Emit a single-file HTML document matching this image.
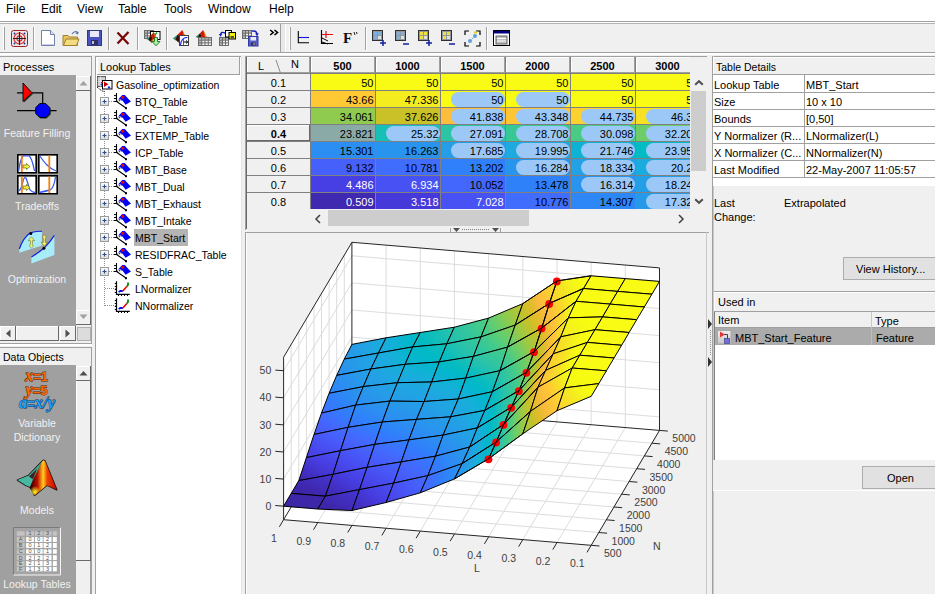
<!DOCTYPE html><html><head><meta charset="utf-8"><style>
html,body{margin:0;padding:0;width:935px;height:594px;overflow:hidden;background:#f0f0f0}
.a{position:absolute}
.t{white-space:nowrap;font-family:"Liberation Sans",sans-serif}
.tl{font-family:"Liberation Sans",sans-serif;font-size:10.5px;fill:#404040}
svg{overflow:visible}
</style></head><body><div class="a" style="left:0px;top:0px;width:935px;height:21px;background:#fff;"></div><div class="a" style="left:0px;top:21px;width:935px;height:1px;background:#a0a0a0;"></div><div class="a" style="left:0px;top:22px;width:935px;height:1px;background:#fff;"></div><div class="a" style="left:0px;top:23px;width:935px;height:1px;background:#b4b4b4;"></div><div class="a" style="left:0px;top:24px;width:935px;height:28px;background:#f0f0f0;"></div><div class="a" style="left:0px;top:52px;width:935px;height:1px;background:#a0a0a0;"></div><div class="a" style="left:0px;top:53px;width:935px;height:2px;background:#fff;"></div><div class="a" style="left:0px;top:55px;width:935px;height:539px;background:#f0f0f0;"></div><div class="a t" style="top:0.84px;font-size:12px;line-height:16px;color:#000;font-weight:normal;left:6px;">File</div><div class="a t" style="top:0.84px;font-size:12px;line-height:16px;color:#000;font-weight:normal;left:41px;">Edit</div><div class="a t" style="top:0.84px;font-size:12px;line-height:16px;color:#000;font-weight:normal;left:77px;">View</div><div class="a t" style="top:0.84px;font-size:12px;line-height:16px;color:#000;font-weight:normal;left:118px;">Table</div><div class="a t" style="top:0.84px;font-size:12px;line-height:16px;color:#000;font-weight:normal;left:164px;">Tools</div><div class="a t" style="top:0.84px;font-size:12px;line-height:16px;color:#000;font-weight:normal;left:208px;">Window</div><div class="a t" style="top:0.84px;font-size:12px;line-height:16px;color:#000;font-weight:normal;left:269px;">Help</div><div class="a" style="left:3px;top:27px;width:1px;height:23px;background:#fff;"></div><div class="a" style="left:4px;top:27px;width:1px;height:23px;background:#a0a0a0;"></div><div class="a" style="left:33px;top:27px;width:1px;height:23px;background:#a0a0a0;"></div><div class="a" style="left:34px;top:27px;width:1px;height:23px;background:#fff;"></div><div class="a" style="left:108px;top:27px;width:1px;height:23px;background:#a0a0a0;"></div><div class="a" style="left:109px;top:27px;width:1px;height:23px;background:#fff;"></div><div class="a" style="left:137px;top:27px;width:1px;height:23px;background:#a0a0a0;"></div><div class="a" style="left:138px;top:27px;width:1px;height:23px;background:#fff;"></div><div class="a" style="left:166px;top:27px;width:1px;height:23px;background:#a0a0a0;"></div><div class="a" style="left:167px;top:27px;width:1px;height:23px;background:#fff;"></div><div class="a" style="left:280px;top:24px;width:1px;height:28px;background:#a0a0a0;"></div><div class="a" style="left:281px;top:24px;width:4px;height:28px;background:#e8e8e8;"></div><div class="a" style="left:285px;top:24px;width:1px;height:28px;background:#fff;"></div><div class="a" style="left:289px;top:27px;width:1px;height:23px;background:#fff;"></div><div class="a" style="left:290px;top:27px;width:1px;height:23px;background:#a0a0a0;"></div><div class="a" style="left:365px;top:27px;width:1px;height:23px;background:#a0a0a0;"></div><div class="a" style="left:366px;top:27px;width:1px;height:23px;background:#fff;"></div><div class="a" style="left:486px;top:27px;width:1px;height:23px;background:#a0a0a0;"></div><div class="a" style="left:487px;top:27px;width:1px;height:23px;background:#fff;"></div><svg class="a" style="left:11px;top:30px" width="17" height="17" viewBox="0 0 17 17"><rect x="0.5" y="0.5" width="16" height="16" rx="2" fill="#e8e8ec" stroke="#a02020"/><circle cx="8.5" cy="8.5" r="5.5" fill="none" stroke="#e03030" stroke-width="1.2"/><circle cx="8.5" cy="8.5" r="2.6" fill="none" stroke="#e03030" stroke-width="1.1"/><path d="M8.5 2V15M2 8.5H15" stroke="#202020" stroke-width="1.2"/><circle cx="3.5" cy="3.5" r="0.9" fill="#203080"/><circle cx="13.5" cy="3.5" r="0.9" fill="#203080"/><circle cx="3.5" cy="13.5" r="0.9" fill="#203080"/><circle cx="13.5" cy="13.5" r="0.9" fill="#203080"/></svg><svg class="a" style="left:41px;top:30px" width="15" height="17" viewBox="0 0 15 17"><path d="M0.5 0.5H9.5L13.5 4.5V15.5H0.5Z" fill="#fff" stroke="#7080a8"/><path d="M9.5 0.5V4.5H13.5" fill="#dde4f4" stroke="#7080a8"/><path d="M1.5 14.5H12.5" stroke="#c8d0e8"/></svg><svg class="a" style="left:62px;top:30px" width="18" height="17" viewBox="0 0 18 17"><path d="M1 5.5H6L7.5 7H15.5V15.5H1Z" fill="#e8c45a" stroke="#a08030"/><path d="M1.5 15.5L4 9H17L14.5 15.5Z" fill="#f6dc80" stroke="#a08030"/><path d="M10 4Q13 0 16 3" fill="none" stroke="#5070a0" stroke-width="1.2"/><path d="M16.5 1.5L16 4.5L13.5 3.5Z" fill="#5070a0"/></svg><svg class="a" style="left:87px;top:30px" width="15" height="16" viewBox="0 0 15 16"><rect x="0.5" y="0.5" width="14" height="15" fill="#4a52c0" stroke="#303880"/><rect x="3" y="1" width="9" height="6" fill="#e8eaf8"/><rect x="4" y="10" width="7" height="5" fill="#303060"/><rect x="5" y="11" width="2" height="3" fill="#c0c0d0"/></svg><svg class="a" style="left:116px;top:31px" width="14" height="14" viewBox="0 0 14 14"><path d="M1.5 1.5L12.5 13M12.5 1L1.5 12.5" stroke="#780808" stroke-width="2.3"/></svg><svg class="a" style="left:143px;top:29px" width="19" height="19" viewBox="143 29 19 19"><rect x="144" y="30" width="10" height="9" fill="#6a6a6a"/><rect x="145.00" y="31.00" width="2.00" height="1.67" fill="#b8b8b8"/><rect x="148.00" y="31.00" width="2.00" height="1.67" fill="#b8b8b8"/><rect x="151.00" y="31.00" width="2.00" height="1.67" fill="#b8b8b8"/><rect x="145.00" y="33.67" width="2.00" height="1.67" fill="#b8b8b8"/><rect x="148.00" y="33.67" width="2.00" height="1.67" fill="#f2f2f2"/><rect x="151.00" y="33.67" width="2.00" height="1.67" fill="#f2f2f2"/><rect x="145.00" y="36.33" width="2.00" height="1.67" fill="#b8b8b8"/><rect x="148.00" y="36.33" width="2.00" height="1.67" fill="#f2f2f2"/><rect x="151.00" y="36.33" width="2.00" height="1.67" fill="#f2f2f2"/><rect x="150.5" y="31.5" width="9.5" height="8" fill="#fff" stroke="#000"/><path d="M153 32.5L155 35L157 32.5M155 35V38" stroke="#20a030" stroke-width="1.3" fill="none"/><g transform="translate(146.5,32.5) scale(0.72)"><path d="M0 9L5 5L8 7L6 13Z" fill="#2a9070"/><path d="M5 5L10 0L16 12L11 10L7 15L6 13L8 7Z" fill="#d01808"/><path d="M10 0L16 12L13 11Z" fill="#f8a010"/><path d="M7 15L9 9L11 10Z" fill="#f0d020"/><path d="M5 5L8 7L6 13L3 10Z" fill="#400808"/></g><path d="M154.5 37.5H157.5V41.5H160L156 45.8L152 41.5H154.5Z" fill="#a8f0a8" stroke="#187818" stroke-width="0.9"/></svg><svg class="a" style="left:172px;top:29px" width="18" height="18" viewBox="172 29 18 18"><g transform="translate(172.8,30) scale(0.95)"><path d="M0 9L5 5L8 7L6 13Z" fill="#2a9070"/><path d="M5 5L10 0L16 12L11 10L7 15L6 13L8 7Z" fill="#d01808"/><path d="M10 0L16 12L13 11Z" fill="#f8a010"/><path d="M7 15L9 9L11 10Z" fill="#f0d020"/><path d="M5 5L8 7L6 13L3 10Z" fill="#400808"/></g><rect x="179.5" y="35.5" width="9" height="10" fill="#fff" stroke="#404040"/><path d="M180.5 45Q181.5 37 187.5 37.5" stroke="#1020f0" stroke-width="1.1" fill="none"/><path d="M183.5 38.5V45" stroke="#10a020" stroke-width="1"/><path d="M183.5 42H187.5M186 40.5L187.8 42L186 43.5" stroke="#000" stroke-width="1" fill="none"/></svg><svg class="a" style="left:195px;top:29px" width="18" height="18" viewBox="195 29 18 18"><g transform="translate(195.7,30) scale(0.75)"><path d="M0 9L5 5L8 7L6 13Z" fill="#2a9070"/><path d="M5 5L10 0L16 12L11 10L7 15L6 13L8 7Z" fill="#d01808"/><path d="M10 0L16 12L13 11Z" fill="#f8a010"/><path d="M7 15L9 9L11 10Z" fill="#f0d020"/><path d="M5 5L8 7L6 13L3 10Z" fill="#400808"/></g><rect x="198" y="37" width="14" height="9" fill="#6a6a6a"/><rect x="199.00" y="38.00" width="2.25" height="1.67" fill="#b8b8b8"/><rect x="202.25" y="38.00" width="2.25" height="1.67" fill="#b8b8b8"/><rect x="205.50" y="38.00" width="2.25" height="1.67" fill="#b8b8b8"/><rect x="208.75" y="38.00" width="2.25" height="1.67" fill="#b8b8b8"/><rect x="199.00" y="40.67" width="2.25" height="1.67" fill="#b8b8b8"/><rect x="202.25" y="40.67" width="2.25" height="1.67" fill="#f2f2f2"/><rect x="205.50" y="40.67" width="2.25" height="1.67" fill="#f2f2f2"/><rect x="208.75" y="40.67" width="2.25" height="1.67" fill="#f2f2f2"/><rect x="199.00" y="43.33" width="2.25" height="1.67" fill="#b8b8b8"/><rect x="202.25" y="43.33" width="2.25" height="1.67" fill="#f2f2f2"/><rect x="205.50" y="43.33" width="2.25" height="1.67" fill="#f2f2f2"/><rect x="208.75" y="43.33" width="2.25" height="1.67" fill="#f2f2f2"/></svg><svg class="a" style="left:218px;top:29px" width="19" height="19" viewBox="218 29 19 19"><rect x="219" y="37" width="10" height="9" fill="#6a6a6a"/><rect x="220.00" y="38.00" width="2.00" height="1.67" fill="#b8b8b8"/><rect x="223.00" y="38.00" width="2.00" height="1.67" fill="#b8b8b8"/><rect x="226.00" y="38.00" width="2.00" height="1.67" fill="#b8b8b8"/><rect x="220.00" y="40.67" width="2.00" height="1.67" fill="#b8b8b8"/><rect x="223.00" y="40.67" width="2.00" height="1.67" fill="#f2f2f2"/><rect x="226.00" y="40.67" width="2.00" height="1.67" fill="#f2f2f2"/><rect x="220.00" y="43.33" width="2.00" height="1.67" fill="#b8b8b8"/><rect x="223.00" y="43.33" width="2.00" height="1.67" fill="#f2f2f2"/><rect x="226.00" y="43.33" width="2.00" height="1.67" fill="#f2f2f2"/><path d="M225 33Q221 31 220.5 35" stroke="#1020c0" stroke-width="1.4" fill="none"/><path d="M218.8 34L222.3 34L220.5 36.8Z" fill="#1020c0"/><rect x="225.5" y="30.5" width="6" height="6.5" fill="#fff" stroke="#000"/><rect x="229" y="32.5" width="6.5" height="6.5" fill="#f0f000" stroke="#000"/><rect x="230.5" y="36" width="3.5" height="2.5" fill="#505050"/></svg><svg class="a" style="left:241px;top:29px" width="19" height="19" viewBox="241 29 19 19"><rect x="242" y="30" width="10" height="9" fill="#6a6a6a"/><rect x="243.00" y="31.00" width="2.00" height="1.67" fill="#b8b8b8"/><rect x="246.00" y="31.00" width="2.00" height="1.67" fill="#b8b8b8"/><rect x="249.00" y="31.00" width="2.00" height="1.67" fill="#b8b8b8"/><rect x="243.00" y="33.67" width="2.00" height="1.67" fill="#b8b8b8"/><rect x="246.00" y="33.67" width="2.00" height="1.67" fill="#f2f2f2"/><rect x="249.00" y="33.67" width="2.00" height="1.67" fill="#f2f2f2"/><rect x="243.00" y="36.33" width="2.00" height="1.67" fill="#b8b8b8"/><rect x="246.00" y="36.33" width="2.00" height="1.67" fill="#f2f2f2"/><rect x="249.00" y="36.33" width="2.00" height="1.67" fill="#f2f2f2"/><path d="M252 31Q256.5 30.5 257 34" stroke="#1020c0" stroke-width="1.4" fill="none"/><path d="M255.2 33.5H258.8L257 36.3Z" fill="#1020c0"/><rect x="248.5" y="36.5" width="9.5" height="9.5" fill="#5860c8" stroke="#3038a0"/><rect x="250.5" y="37" width="5.5" height="3.5" fill="#e8ecf8"/><rect x="251" y="42.5" width="4.5" height="3" fill="#303050"/><rect x="253.5" y="43" width="1.2" height="2" fill="#b0b0c0"/></svg><svg class="a" style="left:268px;top:28px" width="12" height="9" viewBox="268 28 12 9"><path d="M270.2 30L273.2 32.5L270.2 35M274.5 30L277.5 32.5L274.5 35" stroke="#000" stroke-width="1.6" fill="none"/></svg><svg class="a" style="left:297px;top:30px" width="13" height="15" viewBox="0 0 13 15"><path d="M1.3 1V12.7H12" stroke="#000" fill="none" stroke-width="1.1"/><path d="M2 7.5H12" stroke="#1010e0" stroke-width="1.1"/></svg><svg class="a" style="left:320px;top:30px" width="14" height="15" viewBox="0 0 14 15"><path d="M1.5 0V13.5H13" stroke="#000" fill="none" stroke-width="1.2"/><path d="M2 4.5H13M6 1V8" stroke="#e01010" stroke-width="1.2"/><path d="M2 8L8 11M2 12L8 14" stroke="#000" stroke-width="1"/></svg><svg class="a" style="left:343px;top:30px" width="15" height="15" viewBox="0 0 15 15"><text x="0" y="13" font-family="Liberation Serif" font-weight="bold" font-size="15" fill="#101010">F</text><path d="M11 2L12 5M13.5 2L14 4" stroke="#202020"/></svg><svg class="a" style="left:372px;top:30px" width="15" height="17" viewBox="0 0 15 17"><rect x="0.5" y="0.5" width="10" height="10" fill="#9098a0" stroke="#303030"/><rect x="2" y="2" width="3" height="3" fill="#80b0e0"/><rect x="6" y="2" width="3" height="3" fill="#80b0e0"/><rect x="2" y="6" width="3" height="3" fill="#80b0e0"/><rect x="6" y="6" width="3" height="3" fill="#e0e0e0"/><path d="M8 13H14M11 10V16" stroke="#1020a0" stroke-width="1.5"/></svg><svg class="a" style="left:395px;top:30px" width="15" height="17" viewBox="0 0 15 17"><rect x="0.5" y="0.5" width="10" height="10" fill="#9098a0" stroke="#303030"/><rect x="2" y="2" width="3" height="3" fill="#80b0e0"/><rect x="6" y="2" width="3" height="3" fill="#80b0e0"/><rect x="2" y="6" width="3" height="3" fill="#80b0e0"/><rect x="6" y="6" width="3" height="3" fill="#e0e0e0"/><path d="M8 14H14" stroke="#1020a0" stroke-width="1.5"/></svg><svg class="a" style="left:418px;top:30px" width="15" height="17" viewBox="0 0 15 17"><rect x="0.5" y="0.5" width="10" height="10" fill="#9098a0" stroke="#303030"/><rect x="2" y="2" width="3" height="3" fill="#f0e040"/><rect x="6" y="2" width="3" height="3" fill="#f0e040"/><rect x="2" y="6" width="3" height="3" fill="#f0e040"/><rect x="6" y="6" width="3" height="3" fill="#e0e0e0"/><path d="M8 13H14M11 10V16" stroke="#1020a0" stroke-width="1.5"/></svg><svg class="a" style="left:441px;top:30px" width="15" height="17" viewBox="0 0 15 17"><rect x="0.5" y="0.5" width="10" height="10" fill="#9098a0" stroke="#303030"/><rect x="2" y="2" width="3" height="3" fill="#f0e040"/><rect x="6" y="2" width="3" height="3" fill="#f0e040"/><rect x="2" y="6" width="3" height="3" fill="#f0e040"/><rect x="6" y="6" width="3" height="3" fill="#e0e0e0"/><path d="M8 14H14" stroke="#1020a0" stroke-width="1.5"/></svg><svg class="a" style="left:464px;top:30px" width="17" height="17" viewBox="0 0 17 17"><path d="M1 5V1H5M12 1H16V5M16 12V16H12M5 16H1V12" stroke="#000" fill="none" stroke-width="1.2"/><circle cx="6" cy="11" r="2" fill="#60a0e0"/><circle cx="11" cy="6" r="2" fill="#60a0e0"/><path d="M6 11L11 6" stroke="#60a0e0" stroke-dasharray="1.5 1"/><rect x="10" y="1.5" width="3" height="2" fill="#e0d020"/></svg><svg class="a" style="left:493px;top:30px" width="17" height="16" viewBox="0 0 17 16"><rect x="0.5" y="0.5" width="16" height="15" fill="#fff" stroke="#000"/><rect x="1" y="1" width="15" height="2.5" fill="#000080"/><rect x="3" y="6" width="11" height="8" fill="#c0c0c0" stroke="#606060"/><path d="M4 8.5H13M4 11H13" stroke="#fff"/></svg><div class="a" style="left:0px;top:56px;width:92px;height:1px;background:#a0a0a0;"></div><div class="a" style="left:91px;top:56px;width:1px;height:287px;background:#a0a0a0;"></div><div class="a t" style="top:59.69px;font-size:11px;line-height:15px;color:#000;font-weight:normal;left:3px;">Processes</div><div class="a" style="left:0px;top:75px;width:76px;height:251px;background:#a0a0a0;"></div><div class="a" style="left:76px;top:75px;width:15px;height:251px;background:#f0f0f0;"></div><div class="a" style="left:76px;top:76px;width:15px;height:15px;background:#f0f0f0;box-shadow:inset -1px -1px #696969, inset 1px 1px #fff;"></div><svg class="a" style="left:79px;top:80px" width="9" height="6" viewBox="0 0 9 6"><path d="M0.5 5.5L4.5 1L8.5 5.5Z" fill="#a0a0a0"/></svg><div class="a" style="left:76px;top:310px;width:15px;height:15px;background:#f0f0f0;box-shadow:inset -1px -1px #696969, inset 1px 1px #fff;"></div><svg class="a" style="left:79px;top:314px" width="9" height="6" viewBox="0 0 9 6"><path d="M0.5 0.5L4.5 5L8.5 0.5Z" fill="#a0a0a0"/></svg><div class="a" style="left:76px;top:91px;width:15px;height:219px;background:#f0f0f0;box-shadow:inset -1px 0 #696969;"></div><div class="a" style="left:0px;top:326px;width:91px;height:15px;background:#f0f0f0;"></div><div class="a" style="left:0px;top:326px;width:16px;height:15px;background:#f0f0f0;box-shadow:inset -1px -1px #696969, inset 1px 1px #fff;"></div><svg class="a" style="left:5px;top:329px" width="6" height="9" viewBox="0 0 6 9"><path d="M5.5 0.5L1 4.5L5.5 8.5Z" fill="#505050"/></svg><div class="a" style="left:16px;top:326px;width:43px;height:15px;background:#f0f0f0;box-shadow:inset -1px -1px #696969, inset 1px 1px #fff;"></div><div class="a" style="left:60px;top:326px;width:16px;height:15px;background:#f0f0f0;box-shadow:inset -1px -1px #696969, inset 1px 1px #fff;"></div><svg class="a" style="left:65px;top:329px" width="6" height="9" viewBox="0 0 6 9"><path d="M0.5 0.5L5 4.5L0.5 8.5Z" fill="#505050"/></svg><div class="a" style="left:77px;top:327px;width:14px;height:14px;background:#dcdcdc;border:1px solid #b0b0b0;box-sizing:border-box;"></div><svg class="a" style="left:10px;top:78px" width="55" height="50" viewBox="10 78 55 50"><path d="M17 92.8H23M32 92.8H42.7V103M17 110.6H56.6" stroke="#000" stroke-width="1.2" fill="none"/><path d="M24 84.5L33 94L24 102.5Z" fill="#303030"/><path d="M23 83L32 92.8L23 101.5Z" fill="#f00" stroke="#000" stroke-width="0.9"/><polygon points="50.72,114.41 46.61,118.52 40.79,118.52 36.68,114.41 36.68,108.59 40.79,104.48 46.61,104.48 50.72,108.59" fill="#303030"/><polygon points="49.72,113.41 45.61,117.52 39.79,117.52 35.68,113.41 35.68,107.59 39.79,103.48 45.61,103.48 49.72,107.59" fill="#0000f8" stroke="#000" stroke-width="0.9"/></svg><div class="a t" style="top:126.11px;font-size:10.5px;line-height:14.5px;color:#f2f2f2;font-weight:normal;left:-113px;width:300px;text-align:center;">Feature Filling</div><svg class="a" style="left:17px;top:154px" width="41" height="41" viewBox="0 0 41 41"><g transform="translate(0,0)"><rect x="1" y="1" width="18" height="17.5" fill="#fff" stroke="#303030" stroke-width="0.6"/><rect x="0.75" y="0.75" width="18.5" height="18" fill="none" stroke="#000" stroke-width="1.5"/><path d="M1.6 17Q3 6 6 1.8H12Q15 4 17.5 17" stroke="#3a5af0" fill="none" stroke-width="1.3"/><path d="M4.8 1.5V18" stroke="#f88000" stroke-width="1.8"/><path d="M6 11.0H9.5V9.5L13 12.5L9.5 15.5V14.0H6Z" fill="#f0f040" stroke="#505000" stroke-width="0.6"/></g><g transform="translate(21,0)"><rect x="1" y="1" width="18" height="17.5" fill="#fff" stroke="#303030" stroke-width="0.6"/><rect x="0.75" y="0.75" width="18.5" height="18" fill="none" stroke="#000" stroke-width="1.5"/><path d="M1.5 1.5Q6 8 9 11Q13 15 18 17" stroke="#3a5af0" fill="none" stroke-width="1.3"/><path d="M11.3 1.5V18" stroke="#f88000" stroke-width="1.8"/></g><g transform="translate(0,21)"><rect x="1" y="1" width="18" height="17.5" fill="#fff" stroke="#303030" stroke-width="0.6"/><rect x="0.75" y="0.75" width="18.5" height="18" fill="none" stroke="#000" stroke-width="1.5"/><path d="M1.5 16Q4 15 5.5 8Q7 1 9 3Q11 8 12 13Q14 17 18 17.5" stroke="#3a5af0" fill="none" stroke-width="1.3"/><path d="M4.8 1.5V18" stroke="#f88000" stroke-width="1.8"/><path d="M6 11.0H9.5V9.5L13 12.5L9.5 15.5V14.0H6Z" fill="#f0f040" stroke="#505000" stroke-width="0.6"/></g><g transform="translate(21,21)"><rect x="1" y="1" width="18" height="17.5" fill="#fff" stroke="#303030" stroke-width="0.6"/><rect x="0.75" y="0.75" width="18.5" height="18" fill="none" stroke="#000" stroke-width="1.5"/><path d="M1.5 17.5Q8 16 12 15Q16 13 17.5 2" stroke="#3a5af0" fill="none" stroke-width="1.3"/><path d="M11.3 1.5V18" stroke="#f88000" stroke-width="1.8"/></g></svg><div class="a t" style="top:199.11px;font-size:10.5px;line-height:14.5px;color:#f2f2f2;font-weight:normal;left:-113px;width:300px;text-align:center;">Tradeoffs</div><svg class="a" style="left:14px;top:226px" width="46" height="40" viewBox="14 226 46 40"><path d="M19.3 249Q23 238 30 233Q35 231 41.9 231.3V245.4L19.3 252.7Z" fill="#a8ecfa"/><path d="M19.3 249Q23 238 30 233Q35 231 41.9 231.3" stroke="#1020e0" stroke-width="1.2" fill="none"/><path d="M31.4 257.1Q38 253 43.9 248.3Q50 242 54.4 235.3V255.1L31.4 263.6Z" fill="#a8ecfa"/><path d="M31.4 257.1Q38 253 43.9 248.3Q50 242 54.4 235.3" stroke="#1020e0" stroke-width="1.2" fill="none"/><circle cx="30.8" cy="233.6" r="1.5" fill="#000"/><circle cx="43.9" cy="248.3" r="1.5" fill="#000"/><path d="M31.4 236.8L34.6 240.6H32.4V244.3L33.3 246.2L31.4 248L29.5 246.2L30.4 244.3V240.6H28.2Z" fill="#f4f070" stroke="#606000" stroke-width="0.5"/><path d="M44.3 246.2L47.5 242.4H45.3V238.7L46.2 236.8L44.3 235L42.4 236.8L43.3 238.7V242.4H41.1Z" fill="#f4f070" stroke="#606000" stroke-width="0.5"/></svg><div class="a t" style="top:272.11px;font-size:10.5px;line-height:14.5px;color:#f2f2f2;font-weight:normal;left:-113px;width:300px;text-align:center;">Optimization</div><div class="a" style="left:0px;top:343px;width:92px;height:1px;background:#a0a0a0;"></div><div class="a" style="left:0px;top:344px;width:92px;height:2px;background:#fff;"></div><div class="a" style="left:0px;top:347px;width:92px;height:1px;background:#a0a0a0;"></div><div class="a" style="left:91px;top:347px;width:1px;height:247px;background:#a0a0a0;"></div><div class="a t" style="top:350.11px;font-size:10.5px;line-height:14.5px;color:#000;font-weight:normal;left:3px;">Data Objects</div><div class="a" style="left:0px;top:365px;width:76px;height:229px;background:#a0a0a0;"></div><div class="a" style="left:76px;top:365px;width:15px;height:229px;background:#f0f0f0;"></div><div class="a" style="left:76px;top:366px;width:15px;height:15px;background:#f0f0f0;box-shadow:inset -1px -1px #696969, inset 1px 1px #fff;"></div><svg class="a" style="left:79px;top:370px" width="9" height="6" viewBox="0 0 9 6"><path d="M0.5 5.5L4.5 1L8.5 5.5Z" fill="#505050"/></svg><div class="a" style="left:76px;top:381px;width:15px;height:180px;background:#f0f0f0;box-shadow:inset -1px -1px #696969, inset 1px 0 #fff;"></div><div class="a" style="left:76px;top:561px;width:15px;height:33px;background:#f0f0f0;box-shadow:inset -1px 0 #a0a0a0;"></div><svg class="a" style="left:10px;top:366px" width="55" height="48" viewBox="10 366 55 48"><text x="36.5" y="381.3" text-anchor="middle" fill="#f86a00" stroke="#5a2000" stroke-width="0.9" paint-order="stroke"><tspan font-family="Liberation Serif" font-style="italic" font-weight="bold" font-size="16.5">x</tspan><tspan font-family="Liberation Sans" font-weight="bold" font-size="13">=1</tspan></text><text x="36.5" y="394.5" text-anchor="middle" fill="#f86a00" stroke="#5a2000" stroke-width="0.9" paint-order="stroke"><tspan font-family="Liberation Serif" font-style="italic" font-weight="bold" font-size="16.5">y</tspan><tspan font-family="Liberation Sans" font-weight="bold" font-size="13">=5</tspan></text><text x="37" y="407.5" text-anchor="middle" fill="#18a0f8" stroke="#083060" stroke-width="0.9" paint-order="stroke"><tspan font-family="Liberation Serif" font-style="italic" font-weight="bold" font-size="16.5">a</tspan><tspan font-family="Liberation Sans" font-weight="bold" font-size="13">=</tspan><tspan font-family="Liberation Serif" font-style="italic" font-weight="bold" font-size="16.5">x/y</tspan></text></svg><div class="a t" style="top:416.11px;font-size:10.5px;line-height:14.5px;color:#f2f2f2;font-weight:normal;left:-113px;width:300px;text-align:center;">Variable</div><div class="a t" style="top:430.11px;font-size:10.5px;line-height:14.5px;color:#f2f2f2;font-weight:normal;left:-113px;width:300px;text-align:center;">Dictionary</div><svg class="a" style="left:14px;top:456px" width="46" height="44" viewBox="14 456 46 44"><defs><linearGradient id="mlb" gradientUnits="userSpaceOnUse" x1="31" y1="478" x2="57" y2="478"><stop offset="0" stop-color="#400000"/><stop offset="0.25" stop-color="#c01000"/><stop offset="0.47" stop-color="#ffd020"/><stop offset="0.62" stop-color="#f04000"/><stop offset="1" stop-color="#c00000"/></linearGradient><radialGradient id="mly" gradientUnits="userSpaceOnUse" cx="35" cy="492" r="6"><stop offset="0" stop-color="#ffff20"/><stop offset="1" stop-color="#ffff20" stop-opacity="0"/></radialGradient></defs><path d="M17.4 480.1L28.5 475.5L41.5 462L43.3 460.2L45 461L56.8 489.8L47 485.2L34.5 495.4L29.9 487L26.2 485.6Z" fill="#101010" stroke="#101010" stroke-width="1.4" stroke-linejoin="round"/><path d="M33.1 479.6L41.5 462L43.3 460.2L45 461L56.8 489.8L47 485.2L34.5 495.4L29.9 487Z" fill="url(#mlb)"/><path d="M29 490L34.5 495.4L42 489L36 484Z" fill="url(#mly)"/><path d="M17.4 480.1L28.5 475.5L33.1 479.6L29.9 487L26.2 485.6Z" fill="#48b8a0"/><path d="M28.5 475.5L41.5 462L39 468L33.1 479.6Z" fill="#40a890"/><path d="M29 476.5L37 469L33 479Z" fill="#402020"/></svg><div class="a t" style="top:503.11px;font-size:10.5px;line-height:14.5px;color:#f2f2f2;font-weight:normal;left:-113px;width:300px;text-align:center;">Models</div><svg class="a" style="left:10px;top:524px" width="55" height="55" viewBox="10 524 55 55"><rect x="13.5" y="527.5" width="47" height="47.5" fill="#a4a4a4"/><path d="M13.5 575V527.5H60.5" stroke="#7a7a7a" fill="none"/><path d="M60.5 527.5V575H13.5" stroke="#f4f4f4" fill="none"/><rect x="16.8" y="531.3" width="7.8" height="4.4" fill="#c4c4c4"/><rect x="26.1" y="531.3" width="7.8" height="4.4" fill="#c4c4c4"/><text x="30.0" y="535.1" text-anchor="middle" font-family="Liberation Sans" font-size="5.5" fill="#505050">1</text><rect x="34.9" y="531.3" width="7.8" height="4.4" fill="#c4c4c4"/><text x="38.8" y="535.1" text-anchor="middle" font-family="Liberation Sans" font-size="5.5" fill="#505050">2</text><rect x="43.6" y="531.3" width="7.9" height="4.4" fill="#c4c4c4"/><text x="47.5" y="535.1" text-anchor="middle" font-family="Liberation Sans" font-size="5.5" fill="#505050">3</text><rect x="52.9" y="531.3" width="3.9" height="4.4" fill="#c4c4c4"/><rect x="16.8" y="537.1" width="7.8" height="4.9" fill="#c4c4c4"/><text x="20.7" y="541.4" text-anchor="middle" font-family="Liberation Sans" font-size="5.5" fill="#505050">A</text><rect x="26.1" y="537.1" width="7.8" height="4.9" fill="#ffffff"/><text x="30.0" y="541.4" text-anchor="middle" font-family="Liberation Sans" font-size="5.5" fill="#505050">0</text><rect x="34.9" y="537.1" width="7.8" height="4.9" fill="#ffffff"/><text x="38.8" y="541.4" text-anchor="middle" font-family="Liberation Sans" font-size="5.5" fill="#505050">0</text><rect x="43.6" y="537.1" width="7.9" height="4.9" fill="#ffffff"/><text x="47.5" y="541.4" text-anchor="middle" font-family="Liberation Sans" font-size="5.5" fill="#505050">2</text><rect x="52.9" y="537.1" width="3.9" height="4.9" fill="#ffffff"/><rect x="16.8" y="543" width="7.8" height="4.9" fill="#c4c4c4"/><text x="20.7" y="547.3" text-anchor="middle" font-family="Liberation Sans" font-size="5.5" fill="#505050">B</text><rect x="26.1" y="543" width="7.8" height="4.9" fill="#ffffff"/><text x="30.0" y="547.3" text-anchor="middle" font-family="Liberation Sans" font-size="5.5" fill="#505050">0</text><rect x="34.9" y="543" width="7.8" height="4.9" fill="#ffffff"/><text x="38.8" y="547.3" text-anchor="middle" font-family="Liberation Sans" font-size="5.5" fill="#505050">1</text><rect x="43.6" y="543" width="7.9" height="4.9" fill="#ffffff"/><text x="47.5" y="547.3" text-anchor="middle" font-family="Liberation Sans" font-size="5.5" fill="#505050">2</text><rect x="52.9" y="543" width="3.9" height="4.9" fill="#ffffff"/><rect x="16.8" y="549.3" width="7.8" height="4.4" fill="#c4c4c4"/><text x="20.7" y="553.1" text-anchor="middle" font-family="Liberation Sans" font-size="5.5" fill="#505050">C</text><rect x="26.1" y="549.3" width="7.8" height="4.4" fill="#ffffff"/><text x="30.0" y="553.1" text-anchor="middle" font-family="Liberation Sans" font-size="5.5" fill="#505050">0</text><rect x="34.9" y="549.3" width="7.8" height="4.4" fill="#ffffff"/><text x="38.8" y="553.1" text-anchor="middle" font-family="Liberation Sans" font-size="5.5" fill="#505050">0</text><rect x="43.6" y="549.3" width="7.9" height="4.4" fill="#ffffff"/><text x="47.5" y="553.1" text-anchor="middle" font-family="Liberation Sans" font-size="5.5" fill="#505050">1</text><rect x="52.9" y="549.3" width="3.9" height="4.4" fill="#ffffff"/><rect x="16.8" y="555.2" width="7.8" height="4.9" fill="#c4c4c4"/><text x="20.7" y="559.5" text-anchor="middle" font-family="Liberation Sans" font-size="5.5" fill="#505050">D</text><rect x="26.1" y="555.2" width="7.8" height="4.9" fill="#ffffff"/><text x="30.0" y="559.5" text-anchor="middle" font-family="Liberation Sans" font-size="5.5" fill="#505050">2</text><rect x="34.9" y="555.2" width="7.8" height="4.9" fill="#ffffff"/><text x="38.8" y="559.5" text-anchor="middle" font-family="Liberation Sans" font-size="5.5" fill="#505050">2</text><rect x="43.6" y="555.2" width="7.9" height="4.9" fill="#ffffff"/><text x="47.5" y="559.5" text-anchor="middle" font-family="Liberation Sans" font-size="5.5" fill="#505050">2</text><rect x="52.9" y="555.2" width="3.9" height="4.9" fill="#ffffff"/><rect x="16.8" y="561.1" width="7.8" height="4.9" fill="#c4c4c4"/><text x="20.7" y="565.4" text-anchor="middle" font-family="Liberation Sans" font-size="5.5" fill="#505050">E</text><rect x="26.1" y="561.1" width="7.8" height="4.9" fill="#ffffff"/><text x="30.0" y="565.4" text-anchor="middle" font-family="Liberation Sans" font-size="5.5" fill="#505050">2</text><rect x="34.9" y="561.1" width="7.8" height="4.9" fill="#ffffff"/><text x="38.8" y="565.4" text-anchor="middle" font-family="Liberation Sans" font-size="5.5" fill="#505050">1</text><rect x="43.6" y="561.1" width="7.9" height="4.9" fill="#ffffff"/><text x="47.5" y="565.4" text-anchor="middle" font-family="Liberation Sans" font-size="5.5" fill="#505050">3</text><rect x="52.9" y="561.1" width="3.9" height="4.9" fill="#ffffff"/><rect x="16.8" y="566.9" width="7.8" height="4.4" fill="#c4c4c4"/><text x="20.7" y="570.7" text-anchor="middle" font-family="Liberation Sans" font-size="5.5" fill="#505050">F</text><rect x="26.1" y="566.9" width="7.8" height="4.4" fill="#ffffff"/><text x="30.0" y="570.7" text-anchor="middle" font-family="Liberation Sans" font-size="5.5" fill="#505050">1</text><rect x="34.9" y="566.9" width="7.8" height="4.4" fill="#ffffff"/><text x="38.8" y="570.7" text-anchor="middle" font-family="Liberation Sans" font-size="5.5" fill="#505050">3</text><rect x="43.6" y="566.9" width="7.9" height="4.4" fill="#ffffff"/><text x="47.5" y="570.7" text-anchor="middle" font-family="Liberation Sans" font-size="5.5" fill="#505050">3</text><rect x="52.9" y="566.9" width="3.9" height="4.4" fill="#ffffff"/></svg><div class="a t" style="top:577.11px;font-size:10.5px;line-height:14.5px;color:#f2f2f2;font-weight:normal;left:-113px;width:300px;text-align:center;">Lookup Tables</div><div class="a" style="left:92px;top:56px;width:3px;height:538px;background:#f0f0f0;"></div><div class="a" style="left:95px;top:56px;width:147px;height:538px;background:#fff;"></div><div class="a" style="left:95px;top:56px;width:147px;height:1px;background:#a0a0a0;"></div><div class="a" style="left:95px;top:56px;width:1px;height:538px;background:#a0a0a0;"></div><div class="a" style="left:96px;top:57px;width:1px;height:537px;background:#ffffff;"></div><div class="a" style="left:241px;top:56px;width:1px;height:538px;background:#e3e3e3;"></div><div class="a" style="left:97px;top:57px;width:143px;height:18px;background:#f0f0f0;box-shadow:inset -1px -1px #a0a0a0, inset 1px 1px #fff;"></div><div class="a t" style="top:59.69px;font-size:11px;line-height:15px;color:#000;font-weight:normal;left:100px;">Lookup Tables</div><svg class="a" style="left:96px;top:75px" width="18" height="18" viewBox="96 75 18 18"><rect x="97.5" y="76.5" width="8" height="10" fill="#c8c8c8" stroke="#404040" stroke-width="0.8"/><path d="M97.5 79H105.5M97.5 81.5H105.5M97.5 84H105.5M100.5 76.5V86.5" stroke="#f0f0f0" stroke-width="0.6"/><rect x="102.5" y="80.5" width="9.5" height="8.5" fill="#fff" stroke="#000"/><path d="M104 81.5V87L108.5 84.2Z" fill="#c00000"/><path d="M101 82.5H103" stroke="#e00000"/><circle cx="101.5" cy="84.5" r="1" fill="#1030f0"/><circle cx="109" cy="87.5" r="1.2" fill="#1030f0"/><path d="M97 87L102 91L105 91.5" stroke="#000" stroke-dasharray="1.2 0.8" fill="none"/></svg><div class="a t" style="top:78.11px;font-size:10.5px;line-height:14.5px;color:#000;font-weight:normal;left:116px;">Gasoline_optimization</div><svg class="a" style="left:100px;top:90px" width="40" height="220"><path d="M4.5 3V216" stroke="#909090" stroke-dasharray="1 1"/><path d="M9 11.5H16" stroke="#909090" stroke-dasharray="1 1"/><path d="M9 28.5H16" stroke="#909090" stroke-dasharray="1 1"/><path d="M9 45.5H16" stroke="#909090" stroke-dasharray="1 1"/><path d="M9 62.5H16" stroke="#909090" stroke-dasharray="1 1"/><path d="M9 79.5H16" stroke="#909090" stroke-dasharray="1 1"/><path d="M9 96.5H16" stroke="#909090" stroke-dasharray="1 1"/><path d="M9 113.5H16" stroke="#909090" stroke-dasharray="1 1"/><path d="M9 130.5H16" stroke="#909090" stroke-dasharray="1 1"/><path d="M9 147.5H16" stroke="#909090" stroke-dasharray="1 1"/><path d="M9 164.5H16" stroke="#909090" stroke-dasharray="1 1"/><path d="M9 181.5H16" stroke="#909090" stroke-dasharray="1 1"/><path d="M5 198.5H16" stroke="#909090" stroke-dasharray="1 1"/><path d="M5 215.5H16" stroke="#909090" stroke-dasharray="1 1"/></svg><svg class="a" style="left:99px;top:96px" width="12" height="12" viewBox="99 96 12 12"><defs><linearGradient id="xb" x1="0" y1="0" x2="0" y2="1"><stop offset="0" stop-color="#fff"/><stop offset="1" stop-color="#d8d8d8"/></linearGradient></defs><rect x="100.5" y="97.5" width="8" height="8" fill="url(#xb)" stroke="#9a9a9a"/><path d="M102.5 101.5H106.5M104.5 99.5V103.5" stroke="#284c8c" stroke-width="1.1"/></svg><svg class="a" style="left:112px;top:92px" width="22" height="20" viewBox="112 92 22 20"><path d="M116.5 93.1V101.5L125.9 108" stroke="#000" fill="none" stroke-width="1.1"/><path d="M114 95.6H116.5M114 98.5H116.5M114 101.5H116.5" stroke="#000" stroke-width="1"/><path d="M116.5 101.5L121.5 100.2" stroke="#000" stroke-width="0.9" stroke-dasharray="1.5 0.8"/><rect x="125" y="107.2" width="2" height="2" fill="#000"/><path d="M118.1 99.4L122.2 95L124.8 95L128.9 99.6L131 101.5L125.6 104.8L122.6 100.7L120.7 99.4Z" fill="#0000f8"/><circle cx="122.8" cy="97.3" r="1.5" fill="#f00000"/></svg><div class="a t" style="top:95.11px;font-size:10.5px;line-height:14.5px;color:#000;font-weight:normal;left:135px;">BTQ_Table</div><svg class="a" style="left:99px;top:113px" width="12" height="12" viewBox="99 113 12 12"><defs><linearGradient id="xb" x1="0" y1="0" x2="0" y2="1"><stop offset="0" stop-color="#fff"/><stop offset="1" stop-color="#d8d8d8"/></linearGradient></defs><rect x="100.5" y="114.5" width="8" height="8" fill="url(#xb)" stroke="#9a9a9a"/><path d="M102.5 118.5H106.5M104.5 116.5V120.5" stroke="#284c8c" stroke-width="1.1"/></svg><svg class="a" style="left:112px;top:109px" width="22" height="20" viewBox="112 109 22 20"><path d="M116.5 110.1V118.5L125.9 125" stroke="#000" fill="none" stroke-width="1.1"/><path d="M114 112.6H116.5M114 115.5H116.5M114 118.5H116.5" stroke="#000" stroke-width="1"/><path d="M116.5 118.5L121.5 117.2" stroke="#000" stroke-width="0.9" stroke-dasharray="1.5 0.8"/><rect x="125" y="124.2" width="2" height="2" fill="#000"/><path d="M118.1 116.4L122.2 112L124.8 112L128.9 116.6L131 118.5L125.6 121.8L122.6 117.7L120.7 116.4Z" fill="#0000f8"/><circle cx="122.8" cy="114.3" r="1.5" fill="#f00000"/></svg><div class="a t" style="top:112.11px;font-size:10.5px;line-height:14.5px;color:#000;font-weight:normal;left:135px;">ECP_Table</div><svg class="a" style="left:99px;top:130px" width="12" height="12" viewBox="99 130 12 12"><defs><linearGradient id="xb" x1="0" y1="0" x2="0" y2="1"><stop offset="0" stop-color="#fff"/><stop offset="1" stop-color="#d8d8d8"/></linearGradient></defs><rect x="100.5" y="131.5" width="8" height="8" fill="url(#xb)" stroke="#9a9a9a"/><path d="M102.5 135.5H106.5M104.5 133.5V137.5" stroke="#284c8c" stroke-width="1.1"/></svg><svg class="a" style="left:112px;top:126px" width="22" height="20" viewBox="112 126 22 20"><path d="M116.5 127.1V135.5L125.9 142" stroke="#000" fill="none" stroke-width="1.1"/><path d="M114 129.6H116.5M114 132.5H116.5M114 135.5H116.5" stroke="#000" stroke-width="1"/><path d="M116.5 135.5L121.5 134.2" stroke="#000" stroke-width="0.9" stroke-dasharray="1.5 0.8"/><rect x="125" y="141.2" width="2" height="2" fill="#000"/><path d="M118.1 133.4L122.2 129L124.8 129L128.9 133.6L131 135.5L125.6 138.8L122.6 134.7L120.7 133.4Z" fill="#0000f8"/><circle cx="122.8" cy="131.3" r="1.5" fill="#f00000"/></svg><div class="a t" style="top:129.11px;font-size:10.5px;line-height:14.5px;color:#000;font-weight:normal;left:135px;">EXTEMP_Table</div><svg class="a" style="left:99px;top:147px" width="12" height="12" viewBox="99 147 12 12"><defs><linearGradient id="xb" x1="0" y1="0" x2="0" y2="1"><stop offset="0" stop-color="#fff"/><stop offset="1" stop-color="#d8d8d8"/></linearGradient></defs><rect x="100.5" y="148.5" width="8" height="8" fill="url(#xb)" stroke="#9a9a9a"/><path d="M102.5 152.5H106.5M104.5 150.5V154.5" stroke="#284c8c" stroke-width="1.1"/></svg><svg class="a" style="left:112px;top:143px" width="22" height="20" viewBox="112 143 22 20"><path d="M116.5 144.1V152.5L125.9 159" stroke="#000" fill="none" stroke-width="1.1"/><path d="M114 146.6H116.5M114 149.5H116.5M114 152.5H116.5" stroke="#000" stroke-width="1"/><path d="M116.5 152.5L121.5 151.2" stroke="#000" stroke-width="0.9" stroke-dasharray="1.5 0.8"/><rect x="125" y="158.2" width="2" height="2" fill="#000"/><path d="M118.1 150.4L122.2 146L124.8 146L128.9 150.6L131 152.5L125.6 155.8L122.6 151.7L120.7 150.4Z" fill="#0000f8"/><circle cx="122.8" cy="148.3" r="1.5" fill="#f00000"/></svg><div class="a t" style="top:146.11px;font-size:10.5px;line-height:14.5px;color:#000;font-weight:normal;left:135px;">ICP_Table</div><svg class="a" style="left:99px;top:164px" width="12" height="12" viewBox="99 164 12 12"><defs><linearGradient id="xb" x1="0" y1="0" x2="0" y2="1"><stop offset="0" stop-color="#fff"/><stop offset="1" stop-color="#d8d8d8"/></linearGradient></defs><rect x="100.5" y="165.5" width="8" height="8" fill="url(#xb)" stroke="#9a9a9a"/><path d="M102.5 169.5H106.5M104.5 167.5V171.5" stroke="#284c8c" stroke-width="1.1"/></svg><svg class="a" style="left:112px;top:160px" width="22" height="20" viewBox="112 160 22 20"><path d="M116.5 161.1V169.5L125.9 176" stroke="#000" fill="none" stroke-width="1.1"/><path d="M114 163.6H116.5M114 166.5H116.5M114 169.5H116.5" stroke="#000" stroke-width="1"/><path d="M116.5 169.5L121.5 168.2" stroke="#000" stroke-width="0.9" stroke-dasharray="1.5 0.8"/><rect x="125" y="175.2" width="2" height="2" fill="#000"/><path d="M118.1 167.4L122.2 163L124.8 163L128.9 167.6L131 169.5L125.6 172.8L122.6 168.7L120.7 167.4Z" fill="#0000f8"/><circle cx="122.8" cy="165.3" r="1.5" fill="#f00000"/></svg><div class="a t" style="top:163.11px;font-size:10.5px;line-height:14.5px;color:#000;font-weight:normal;left:135px;">MBT_Base</div><svg class="a" style="left:99px;top:181px" width="12" height="12" viewBox="99 181 12 12"><defs><linearGradient id="xb" x1="0" y1="0" x2="0" y2="1"><stop offset="0" stop-color="#fff"/><stop offset="1" stop-color="#d8d8d8"/></linearGradient></defs><rect x="100.5" y="182.5" width="8" height="8" fill="url(#xb)" stroke="#9a9a9a"/><path d="M102.5 186.5H106.5M104.5 184.5V188.5" stroke="#284c8c" stroke-width="1.1"/></svg><svg class="a" style="left:112px;top:177px" width="22" height="20" viewBox="112 177 22 20"><path d="M116.5 178.1V186.5L125.9 193" stroke="#000" fill="none" stroke-width="1.1"/><path d="M114 180.6H116.5M114 183.5H116.5M114 186.5H116.5" stroke="#000" stroke-width="1"/><path d="M116.5 186.5L121.5 185.2" stroke="#000" stroke-width="0.9" stroke-dasharray="1.5 0.8"/><rect x="125" y="192.2" width="2" height="2" fill="#000"/><path d="M118.1 184.4L122.2 180L124.8 180L128.9 184.6L131 186.5L125.6 189.8L122.6 185.7L120.7 184.4Z" fill="#0000f8"/><circle cx="122.8" cy="182.3" r="1.5" fill="#f00000"/></svg><div class="a t" style="top:180.11px;font-size:10.5px;line-height:14.5px;color:#000;font-weight:normal;left:135px;">MBT_Dual</div><svg class="a" style="left:99px;top:198px" width="12" height="12" viewBox="99 198 12 12"><defs><linearGradient id="xb" x1="0" y1="0" x2="0" y2="1"><stop offset="0" stop-color="#fff"/><stop offset="1" stop-color="#d8d8d8"/></linearGradient></defs><rect x="100.5" y="199.5" width="8" height="8" fill="url(#xb)" stroke="#9a9a9a"/><path d="M102.5 203.5H106.5M104.5 201.5V205.5" stroke="#284c8c" stroke-width="1.1"/></svg><svg class="a" style="left:112px;top:194px" width="22" height="20" viewBox="112 194 22 20"><path d="M116.5 195.1V203.5L125.9 210" stroke="#000" fill="none" stroke-width="1.1"/><path d="M114 197.6H116.5M114 200.5H116.5M114 203.5H116.5" stroke="#000" stroke-width="1"/><path d="M116.5 203.5L121.5 202.2" stroke="#000" stroke-width="0.9" stroke-dasharray="1.5 0.8"/><rect x="125" y="209.2" width="2" height="2" fill="#000"/><path d="M118.1 201.4L122.2 197L124.8 197L128.9 201.6L131 203.5L125.6 206.8L122.6 202.7L120.7 201.4Z" fill="#0000f8"/><circle cx="122.8" cy="199.3" r="1.5" fill="#f00000"/></svg><div class="a t" style="top:197.11px;font-size:10.5px;line-height:14.5px;color:#000;font-weight:normal;left:135px;">MBT_Exhaust</div><svg class="a" style="left:99px;top:215px" width="12" height="12" viewBox="99 215 12 12"><defs><linearGradient id="xb" x1="0" y1="0" x2="0" y2="1"><stop offset="0" stop-color="#fff"/><stop offset="1" stop-color="#d8d8d8"/></linearGradient></defs><rect x="100.5" y="216.5" width="8" height="8" fill="url(#xb)" stroke="#9a9a9a"/><path d="M102.5 220.5H106.5M104.5 218.5V222.5" stroke="#284c8c" stroke-width="1.1"/></svg><svg class="a" style="left:112px;top:211px" width="22" height="20" viewBox="112 211 22 20"><path d="M116.5 212.1V220.5L125.9 227" stroke="#000" fill="none" stroke-width="1.1"/><path d="M114 214.6H116.5M114 217.5H116.5M114 220.5H116.5" stroke="#000" stroke-width="1"/><path d="M116.5 220.5L121.5 219.2" stroke="#000" stroke-width="0.9" stroke-dasharray="1.5 0.8"/><rect x="125" y="226.2" width="2" height="2" fill="#000"/><path d="M118.1 218.4L122.2 214L124.8 214L128.9 218.6L131 220.5L125.6 223.8L122.6 219.7L120.7 218.4Z" fill="#0000f8"/><circle cx="122.8" cy="216.3" r="1.5" fill="#f00000"/></svg><div class="a t" style="top:214.11px;font-size:10.5px;line-height:14.5px;color:#000;font-weight:normal;left:135px;">MBT_Intake</div><svg class="a" style="left:99px;top:232px" width="12" height="12" viewBox="99 232 12 12"><defs><linearGradient id="xb" x1="0" y1="0" x2="0" y2="1"><stop offset="0" stop-color="#fff"/><stop offset="1" stop-color="#d8d8d8"/></linearGradient></defs><rect x="100.5" y="233.5" width="8" height="8" fill="url(#xb)" stroke="#9a9a9a"/><path d="M102.5 237.5H106.5M104.5 235.5V239.5" stroke="#284c8c" stroke-width="1.1"/></svg><svg class="a" style="left:112px;top:228px" width="22" height="20" viewBox="112 228 22 20"><path d="M116.5 229.1V237.5L125.9 244" stroke="#000" fill="none" stroke-width="1.1"/><path d="M114 231.6H116.5M114 234.5H116.5M114 237.5H116.5" stroke="#000" stroke-width="1"/><path d="M116.5 237.5L121.5 236.2" stroke="#000" stroke-width="0.9" stroke-dasharray="1.5 0.8"/><rect x="125" y="243.2" width="2" height="2" fill="#000"/><path d="M118.1 235.4L122.2 231L124.8 231L128.9 235.6L131 237.5L125.6 240.8L122.6 236.7L120.7 235.4Z" fill="#0000f8"/><circle cx="122.8" cy="233.3" r="1.5" fill="#f00000"/></svg><div class="a" style="left:134px;top:229px;width:54px;height:17px;background:#b4b4b4;"></div><div class="a t" style="top:231.11px;font-size:10.5px;line-height:14.5px;color:#000;font-weight:normal;left:135px;">MBT_Start</div><svg class="a" style="left:99px;top:249px" width="12" height="12" viewBox="99 249 12 12"><defs><linearGradient id="xb" x1="0" y1="0" x2="0" y2="1"><stop offset="0" stop-color="#fff"/><stop offset="1" stop-color="#d8d8d8"/></linearGradient></defs><rect x="100.5" y="250.5" width="8" height="8" fill="url(#xb)" stroke="#9a9a9a"/><path d="M102.5 254.5H106.5M104.5 252.5V256.5" stroke="#284c8c" stroke-width="1.1"/></svg><svg class="a" style="left:112px;top:245px" width="22" height="20" viewBox="112 245 22 20"><path d="M116.5 246.1V254.5L125.9 261" stroke="#000" fill="none" stroke-width="1.1"/><path d="M114 248.6H116.5M114 251.5H116.5M114 254.5H116.5" stroke="#000" stroke-width="1"/><path d="M116.5 254.5L121.5 253.2" stroke="#000" stroke-width="0.9" stroke-dasharray="1.5 0.8"/><rect x="125" y="260.2" width="2" height="2" fill="#000"/><path d="M118.1 252.4L122.2 248L124.8 248L128.9 252.6L131 254.5L125.6 257.8L122.6 253.7L120.7 252.4Z" fill="#0000f8"/><circle cx="122.8" cy="250.3" r="1.5" fill="#f00000"/></svg><div class="a t" style="top:248.11px;font-size:10.5px;line-height:14.5px;color:#000;font-weight:normal;left:135px;">RESIDFRAC_Table</div><svg class="a" style="left:99px;top:266px" width="12" height="12" viewBox="99 266 12 12"><defs><linearGradient id="xb" x1="0" y1="0" x2="0" y2="1"><stop offset="0" stop-color="#fff"/><stop offset="1" stop-color="#d8d8d8"/></linearGradient></defs><rect x="100.5" y="267.5" width="8" height="8" fill="url(#xb)" stroke="#9a9a9a"/><path d="M102.5 271.5H106.5M104.5 269.5V273.5" stroke="#284c8c" stroke-width="1.1"/></svg><svg class="a" style="left:112px;top:262px" width="22" height="20" viewBox="112 262 22 20"><path d="M116.5 263.1V271.5L125.9 278" stroke="#000" fill="none" stroke-width="1.1"/><path d="M114 265.6H116.5M114 268.5H116.5M114 271.5H116.5" stroke="#000" stroke-width="1"/><path d="M116.5 271.5L121.5 270.2" stroke="#000" stroke-width="0.9" stroke-dasharray="1.5 0.8"/><rect x="125" y="277.2" width="2" height="2" fill="#000"/><path d="M118.1 269.4L122.2 265L124.8 265L128.9 269.6L131 271.5L125.6 274.8L122.6 270.7L120.7 269.4Z" fill="#0000f8"/><circle cx="122.8" cy="267.3" r="1.5" fill="#f00000"/></svg><div class="a t" style="top:265.11px;font-size:10.5px;line-height:14.5px;color:#000;font-weight:normal;left:135px;">S_Table</div><svg class="a" style="left:112px;top:279px" width="20" height="20" viewBox="112 279 20 20"><path d="M116.5 281.3V294.4H129.8" stroke="#000" stroke-width="1.2" fill="none"/><path d="M114.8 283.5H116.5M114.8 286.5H116.5M114.8 289.5H116.5M114.8 292.5H116.5M118.5 294.4V296M121.5 294.4V296M124.5 294.4V296M127.5 294.4V296" stroke="#000" stroke-width="1"/><path d="M118.6 292L120.3 291H122.8" stroke="#0010f8" stroke-width="1.8" fill="none"/><path d="M122.8 291L126.8 286.5" stroke="#f00000" stroke-width="1.6"/><path d="M126.8 286.5L128 285V282.5" stroke="#008800" stroke-width="1.8" fill="none"/></svg><div class="a t" style="top:282.11px;font-size:10.5px;line-height:14.5px;color:#000;font-weight:normal;left:135px;">LNormalizer</div><svg class="a" style="left:112px;top:296px" width="20" height="20" viewBox="112 296 20 20"><path d="M116.5 298.3V311.4H129.8" stroke="#000" stroke-width="1.2" fill="none"/><path d="M114.8 300.5H116.5M114.8 303.5H116.5M114.8 306.5H116.5M114.8 309.5H116.5M118.5 311.4V313M121.5 311.4V313M124.5 311.4V313M127.5 311.4V313" stroke="#000" stroke-width="1"/><path d="M118.6 309L120.3 308H122.8" stroke="#0010f8" stroke-width="1.8" fill="none"/><path d="M122.8 308L126.8 303.5" stroke="#f00000" stroke-width="1.6"/><path d="M126.8 303.5L128 302V299.5" stroke="#008800" stroke-width="1.8" fill="none"/></svg><div class="a t" style="top:299.11px;font-size:10.5px;line-height:14.5px;color:#000;font-weight:normal;left:135px;">NNormalizer</div><div class="a" style="left:242px;top:56px;width:3px;height:538px;background:#f0f0f0;"></div><div class="a" style="left:245px;top:56px;width:462px;height:174px;background:#f0f0f0;"></div><div class="a" style="left:245px;top:56px;width:462px;height:1px;background:#a0a0a0;"></div><div class="a" style="left:245px;top:56px;width:1px;height:174px;background:#a0a0a0;"></div><div class="a" style="left:246px;top:57px;width:1px;height:172px;background:#696969;"></div><div class="a" style="left:247px;top:57px;width:443px;height:152px;overflow:hidden;background:#808080"><div class="a" style="left:0;top:0;width:63px;height:16px;background:#f0f0f0;box-shadow:inset -1px -1px #a0a0a0, inset 1px 1px #fff"></div><svg class="a" style="left:0;top:0" width="63" height="16"><path d="M29 3L33.5 16" stroke="#8c8c8c"/></svg><div class="a t" style="left:11px;top:1px;font-size:11px;line-height:16px">L</div><div class="a t" style="left:44px;top:-1px;font-size:11px;line-height:16px">N</div><div class="a" style="left:63.5px;top:0;width:64px;height:16px;background:#f0f0f0;box-shadow:inset -1px -1px #a0a0a0, inset 1px 1px #fff"></div><div class="a t" style="left:63.5px;top:1px;width:64px;text-align:center;font-size:11px;line-height:16px;font-weight:bold">500</div><div class="a" style="left:128.5px;top:0;width:64px;height:16px;background:#f0f0f0;box-shadow:inset -1px -1px #a0a0a0, inset 1px 1px #fff"></div><div class="a t" style="left:128.5px;top:1px;width:64px;text-align:center;font-size:11px;line-height:16px;font-weight:bold">1000</div><div class="a" style="left:193.5px;top:0;width:64px;height:16px;background:#f0f0f0;box-shadow:inset -1px -1px #a0a0a0, inset 1px 1px #fff"></div><div class="a t" style="left:193.5px;top:1px;width:64px;text-align:center;font-size:11px;line-height:16px;font-weight:bold">1500</div><div class="a" style="left:258.5px;top:0;width:64px;height:16px;background:#f0f0f0;box-shadow:inset -1px -1px #a0a0a0, inset 1px 1px #fff"></div><div class="a t" style="left:258.5px;top:1px;width:64px;text-align:center;font-size:11px;line-height:16px;font-weight:bold">2000</div><div class="a" style="left:323.5px;top:0;width:64px;height:16px;background:#f0f0f0;box-shadow:inset -1px -1px #a0a0a0, inset 1px 1px #fff"></div><div class="a t" style="left:323.5px;top:1px;width:64px;text-align:center;font-size:11px;line-height:16px;font-weight:bold">2500</div><div class="a" style="left:388.5px;top:0;width:64px;height:16px;background:#f0f0f0;box-shadow:inset -1px -1px #a0a0a0, inset 1px 1px #fff"></div><div class="a t" style="left:388.5px;top:1px;width:64px;text-align:center;font-size:11px;line-height:16px;font-weight:bold">3000</div><div class="a" style="left:0;top:17px;width:63px;height:16px;background:#f0f0f0;box-shadow:inset 0 0 #fff"></div><div class="a t" style="left:0;top:18px;width:63px;text-align:center;font-size:11px;line-height:17px;font-weight:normal">0.1</div><div class="a" style="left:63.5px;top:17px;width:64px;height:16px;background:#f9fb15"></div><div class="a t" style="left:63.5px;top:18px;width:63px;text-align:right;font-size:11px;line-height:17px;color:#000">50</div><div class="a" style="left:128.5px;top:17px;width:64px;height:16px;background:#f9fb15"></div><div class="a t" style="left:128.5px;top:18px;width:63px;text-align:right;font-size:11px;line-height:17px;color:#000">50</div><div class="a" style="left:193.5px;top:17px;width:64px;height:16px;background:#f9fb15"></div><div class="a t" style="left:193.5px;top:18px;width:63px;text-align:right;font-size:11px;line-height:17px;color:#000">50</div><div class="a" style="left:258.5px;top:17px;width:64px;height:16px;background:#f9fb15"></div><div class="a t" style="left:258.5px;top:18px;width:63px;text-align:right;font-size:11px;line-height:17px;color:#000">50</div><div class="a" style="left:323.5px;top:17px;width:64px;height:16px;background:#f9fb15"></div><div class="a t" style="left:323.5px;top:18px;width:63px;text-align:right;font-size:11px;line-height:17px;color:#000">50</div><div class="a" style="left:388.5px;top:17px;width:64px;height:16px;background:#f9fb15"></div><div class="a t" style="left:388.5px;top:18px;width:63px;text-align:right;font-size:11px;line-height:17px;color:#000">50</div><div class="a" style="left:0;top:34px;width:63px;height:16px;background:#f0f0f0;box-shadow:inset 0 0 #fff"></div><div class="a t" style="left:0;top:35px;width:63px;text-align:center;font-size:11px;line-height:17px;font-weight:normal">0.2</div><div class="a" style="left:63.5px;top:34px;width:64px;height:16px;background:#fec934"></div><div class="a t" style="left:63.5px;top:35px;width:63px;text-align:right;font-size:11px;line-height:17px;color:#000">43.66</div><div class="a" style="left:128.5px;top:34px;width:64px;height:16px;background:#f5ec20"></div><div class="a t" style="left:128.5px;top:35px;width:63px;text-align:right;font-size:11px;line-height:17px;color:#000">47.336</div><div class="a" style="left:193.5px;top:34px;width:64px;height:16px;background:#f9fb15"></div><div class="a" style="left:203.5px;top:35px;width:54px;height:15px;border-radius:7.5px;background:#9cc8f8"></div><div class="a t" style="left:193.5px;top:35px;width:63px;text-align:right;font-size:11px;line-height:17px;color:#000">50</div><div class="a" style="left:258.5px;top:34px;width:64px;height:16px;background:#f9fb15"></div><div class="a" style="left:268.5px;top:35px;width:54px;height:15px;border-radius:7.5px;background:#9cc8f8"></div><div class="a t" style="left:258.5px;top:35px;width:63px;text-align:right;font-size:11px;line-height:17px;color:#000">50</div><div class="a" style="left:323.5px;top:34px;width:64px;height:16px;background:#f9fb15"></div><div class="a t" style="left:323.5px;top:35px;width:63px;text-align:right;font-size:11px;line-height:17px;color:#000">50</div><div class="a" style="left:388.5px;top:34px;width:64px;height:16px;background:#f9fb15"></div><div class="a t" style="left:388.5px;top:35px;width:63px;text-align:right;font-size:11px;line-height:17px;color:#000">50</div><div class="a" style="left:0;top:51px;width:63px;height:16px;background:#f0f0f0;box-shadow:inset 0 0 #fff"></div><div class="a t" style="left:0;top:52px;width:63px;text-align:center;font-size:11px;line-height:17px;font-weight:normal">0.3</div><div class="a" style="left:63.5px;top:51px;width:64px;height:16px;background:#8ecb4f"></div><div class="a t" style="left:63.5px;top:52px;width:63px;text-align:right;font-size:11px;line-height:17px;color:#000">34.061</div><div class="a" style="left:128.5px;top:51px;width:64px;height:16px;background:#cac129"></div><div class="a t" style="left:128.5px;top:52px;width:63px;text-align:right;font-size:11px;line-height:17px;color:#000">37.626</div><div class="a" style="left:193.5px;top:51px;width:64px;height:16px;background:#fcbd3d"></div><div class="a" style="left:203.5px;top:52px;width:54px;height:15px;border-radius:7.5px;background:#9cc8f8"></div><div class="a t" style="left:193.5px;top:52px;width:63px;text-align:right;font-size:11px;line-height:17px;color:#000">41.838</div><div class="a" style="left:258.5px;top:51px;width:64px;height:16px;background:#fec635"></div><div class="a" style="left:268.5px;top:52px;width:54px;height:15px;border-radius:7.5px;background:#9cc8f8"></div><div class="a t" style="left:258.5px;top:52px;width:63px;text-align:right;font-size:11px;line-height:17px;color:#000">43.348</div><div class="a" style="left:323.5px;top:51px;width:64px;height:16px;background:#fbd22f"></div><div class="a" style="left:333.5px;top:52px;width:54px;height:15px;border-radius:7.5px;background:#9cc8f8"></div><div class="a t" style="left:323.5px;top:52px;width:63px;text-align:right;font-size:11px;line-height:17px;color:#000">44.735</div><div class="a" style="left:388.5px;top:51px;width:64px;height:16px;background:#f6e125"></div><div class="a" style="left:398.5px;top:52px;width:54px;height:15px;border-radius:7.5px;background:#9cc8f8"></div><div class="a t" style="left:388.5px;top:52px;width:63px;text-align:right;font-size:11px;line-height:17px;color:#000">46.35</div><div class="a" style="left:0;top:68px;width:63px;height:16px;background:#f0f0f0;box-shadow:inset -1px -1px #696969, inset 1px 1px #fff"></div><div class="a t" style="left:0;top:69px;width:63px;text-align:center;font-size:11px;line-height:17px;font-weight:bold">0.4</div><div class="a" style="left:63.5px;top:68px;width:64px;height:16px;background:#8aaaa8"></div><div class="a t" style="left:63.5px;top:69px;width:63px;text-align:right;font-size:11px;line-height:17px;color:#000">23.821</div><div class="a" style="left:128.5px;top:68px;width:64px;height:16px;background:#17bfb6"></div><div class="a" style="left:138.5px;top:69px;width:54px;height:15px;border-radius:7.5px;background:#9cc8f8"></div><div class="a t" style="left:128.5px;top:69px;width:63px;text-align:right;font-size:11px;line-height:17px;color:#000">25.32</div><div class="a" style="left:193.5px;top:68px;width:64px;height:16px;background:#2dc4a6"></div><div class="a" style="left:203.5px;top:69px;width:54px;height:15px;border-radius:7.5px;background:#9cc8f8"></div><div class="a t" style="left:193.5px;top:69px;width:63px;text-align:right;font-size:11px;line-height:17px;color:#000">27.091</div><div class="a" style="left:258.5px;top:68px;width:64px;height:16px;background:#38c895"></div><div class="a" style="left:268.5px;top:69px;width:54px;height:15px;border-radius:7.5px;background:#9cc8f8"></div><div class="a t" style="left:258.5px;top:69px;width:63px;text-align:right;font-size:11px;line-height:17px;color:#000">28.708</div><div class="a" style="left:323.5px;top:68px;width:64px;height:16px;background:#49cb85"></div><div class="a" style="left:333.5px;top:69px;width:54px;height:15px;border-radius:7.5px;background:#9cc8f8"></div><div class="a t" style="left:323.5px;top:69px;width:63px;text-align:right;font-size:11px;line-height:17px;color:#000">30.098</div><div class="a" style="left:388.5px;top:68px;width:64px;height:16px;background:#6ccd69"></div><div class="a" style="left:398.5px;top:69px;width:54px;height:15px;border-radius:7.5px;background:#9cc8f8"></div><div class="a t" style="left:388.5px;top:69px;width:63px;text-align:right;font-size:11px;line-height:17px;color:#000">32.202</div><div class="a" style="left:0;top:85px;width:63px;height:16px;background:#f0f0f0;box-shadow:inset 0 0 #fff"></div><div class="a t" style="left:0;top:86px;width:63px;text-align:center;font-size:11px;line-height:17px;font-weight:normal">0.5</div><div class="a" style="left:63.5px;top:85px;width:64px;height:16px;background:#2c8ef2"></div><div class="a t" style="left:63.5px;top:86px;width:63px;text-align:right;font-size:11px;line-height:17px;color:#000">15.301</div><div class="a" style="left:128.5px;top:85px;width:64px;height:16px;background:#2994ed"></div><div class="a t" style="left:128.5px;top:86px;width:63px;text-align:right;font-size:11px;line-height:17px;color:#000">16.263</div><div class="a" style="left:193.5px;top:85px;width:64px;height:16px;background:#259de7"></div><div class="a" style="left:203.5px;top:86px;width:54px;height:15px;border-radius:7.5px;background:#9cc8f8"></div><div class="a t" style="left:193.5px;top:86px;width:63px;text-align:right;font-size:11px;line-height:17px;color:#000">17.685</div><div class="a" style="left:258.5px;top:85px;width:64px;height:16px;background:#1caadf"></div><div class="a" style="left:268.5px;top:86px;width:54px;height:15px;border-radius:7.5px;background:#9cc8f8"></div><div class="a t" style="left:258.5px;top:86px;width:63px;text-align:right;font-size:11px;line-height:17px;color:#000">19.995</div><div class="a" style="left:323.5px;top:85px;width:64px;height:16px;background:#0eb3d4"></div><div class="a" style="left:333.5px;top:86px;width:54px;height:15px;border-radius:7.5px;background:#9cc8f8"></div><div class="a t" style="left:323.5px;top:86px;width:63px;text-align:right;font-size:11px;line-height:17px;color:#000">21.746</div><div class="a" style="left:388.5px;top:85px;width:64px;height:16px;background:#03bbc2"></div><div class="a" style="left:398.5px;top:86px;width:54px;height:15px;border-radius:7.5px;background:#9cc8f8"></div><div class="a t" style="left:388.5px;top:86px;width:63px;text-align:right;font-size:11px;line-height:17px;color:#000">23.953</div><div class="a" style="left:0;top:102px;width:63px;height:16px;background:#f0f0f0;box-shadow:inset 0 0 #fff"></div><div class="a t" style="left:0;top:103px;width:63px;text-align:center;font-size:11px;line-height:17px;font-weight:normal">0.6</div><div class="a" style="left:63.5px;top:102px;width:64px;height:16px;background:#4660fc"></div><div class="a t" style="left:63.5px;top:103px;width:63px;text-align:right;font-size:11px;line-height:17px;color:#000">9.132</div><div class="a" style="left:128.5px;top:102px;width:64px;height:16px;background:#406dfe"></div><div class="a t" style="left:128.5px;top:103px;width:63px;text-align:right;font-size:11px;line-height:17px;color:#000">10.781</div><div class="a" style="left:193.5px;top:102px;width:64px;height:16px;background:#307ffb"></div><div class="a t" style="left:193.5px;top:103px;width:63px;text-align:right;font-size:11px;line-height:17px;color:#000">13.202</div><div class="a" style="left:258.5px;top:102px;width:64px;height:16px;background:#2994ed"></div><div class="a" style="left:268.5px;top:103px;width:54px;height:15px;border-radius:7.5px;background:#9cc8f8"></div><div class="a t" style="left:258.5px;top:103px;width:63px;text-align:right;font-size:11px;line-height:17px;color:#000">16.284</div><div class="a" style="left:323.5px;top:102px;width:64px;height:16px;background:#23a1e5"></div><div class="a" style="left:333.5px;top:103px;width:54px;height:15px;border-radius:7.5px;background:#9cc8f8"></div><div class="a t" style="left:323.5px;top:103px;width:63px;text-align:right;font-size:11px;line-height:17px;color:#000">18.334</div><div class="a" style="left:388.5px;top:102px;width:64px;height:16px;background:#1babde"></div><div class="a" style="left:398.5px;top:103px;width:54px;height:15px;border-radius:7.5px;background:#9cc8f8"></div><div class="a t" style="left:388.5px;top:103px;width:63px;text-align:right;font-size:11px;line-height:17px;color:#000">20.22</div><div class="a" style="left:0;top:119px;width:63px;height:16px;background:#f0f0f0;box-shadow:inset 0 0 #fff"></div><div class="a t" style="left:0;top:120px;width:63px;text-align:center;font-size:11px;line-height:17px;font-weight:normal">0.7</div><div class="a" style="left:63.5px;top:119px;width:64px;height:16px;background:#473fe3"></div><div class="a t" style="left:63.5px;top:120px;width:63px;text-align:right;font-size:11px;line-height:17px;color:#fff">4.486</div><div class="a" style="left:128.5px;top:119px;width:64px;height:16px;background:#4851f3"></div><div class="a t" style="left:128.5px;top:120px;width:63px;text-align:right;font-size:11px;line-height:17px;color:#fff">6.934</div><div class="a" style="left:193.5px;top:119px;width:64px;height:16px;background:#4367fd"></div><div class="a t" style="left:193.5px;top:120px;width:63px;text-align:right;font-size:11px;line-height:17px;color:#000">10.052</div><div class="a" style="left:258.5px;top:119px;width:64px;height:16px;background:#2f81fa"></div><div class="a t" style="left:258.5px;top:120px;width:63px;text-align:right;font-size:11px;line-height:17px;color:#000">13.478</div><div class="a" style="left:323.5px;top:119px;width:64px;height:16px;background:#2994ed"></div><div class="a" style="left:333.5px;top:120px;width:54px;height:15px;border-radius:7.5px;background:#9cc8f8"></div><div class="a t" style="left:323.5px;top:120px;width:63px;text-align:right;font-size:11px;line-height:17px;color:#000">16.314</div><div class="a" style="left:388.5px;top:119px;width:64px;height:16px;background:#23a0e5"></div><div class="a" style="left:398.5px;top:120px;width:54px;height:15px;border-radius:7.5px;background:#9cc8f8"></div><div class="a t" style="left:388.5px;top:120px;width:63px;text-align:right;font-size:11px;line-height:17px;color:#000">18.245</div><div class="a" style="left:0;top:136px;width:63px;height:16px;background:#f0f0f0;box-shadow:inset 0 0 #fff"></div><div class="a t" style="left:0;top:137px;width:63px;text-align:center;font-size:11px;line-height:17px;font-weight:normal">0.8</div><div class="a" style="left:63.5px;top:136px;width:64px;height:16px;background:#3f29b0"></div><div class="a t" style="left:63.5px;top:137px;width:63px;text-align:right;font-size:11px;line-height:17px;color:#fff">0.509</div><div class="a" style="left:128.5px;top:136px;width:64px;height:16px;background:#4539d9"></div><div class="a t" style="left:128.5px;top:137px;width:63px;text-align:right;font-size:11px;line-height:17px;color:#fff">3.518</div><div class="a" style="left:193.5px;top:136px;width:64px;height:16px;background:#4851f4"></div><div class="a t" style="left:193.5px;top:137px;width:63px;text-align:right;font-size:11px;line-height:17px;color:#fff">7.028</div><div class="a" style="left:258.5px;top:136px;width:64px;height:16px;background:#406dfe"></div><div class="a t" style="left:258.5px;top:137px;width:63px;text-align:right;font-size:11px;line-height:17px;color:#000">10.776</div><div class="a" style="left:323.5px;top:136px;width:64px;height:16px;background:#2e87f7"></div><div class="a t" style="left:323.5px;top:137px;width:63px;text-align:right;font-size:11px;line-height:17px;color:#000">14.307</div><div class="a" style="left:388.5px;top:136px;width:64px;height:16px;background:#269ae8"></div><div class="a" style="left:398.5px;top:137px;width:54px;height:15px;border-radius:7.5px;background:#9cc8f8"></div><div class="a t" style="left:388.5px;top:137px;width:63px;text-align:right;font-size:11px;line-height:17px;color:#000">17.326</div></div><div class="a" style="left:690px;top:57px;width:17px;height:152px;background:#f0f0f0;"></div><svg class="a" style="left:694px;top:79px" width="10" height="7" viewBox="0 0 10 7"><path d="M1.2 5.8L5 2.2L8.8 5.8" stroke="#505050" stroke-width="2" fill="none"/></svg><div class="a" style="left:691px;top:91px;width:15px;height:80px;background:#cdcdcd;"></div><svg class="a" style="left:694px;top:198px" width="10" height="7" viewBox="0 0 10 7"><path d="M1.2 1.2L5 4.8L8.8 1.2" stroke="#505050" stroke-width="2" fill="none"/></svg><div class="a" style="left:247px;top:209px;width:443px;height:18px;background:#f0f0f0;"></div><svg class="a" style="left:314px;top:214px" width="7" height="10" viewBox="0 0 7 10"><path d="M6 1L2 5L6 9" stroke="#404040" stroke-width="1.5" fill="none"/></svg><div class="a" style="left:328px;top:210px;width:201px;height:16px;background:#cdcdcd;"></div><svg class="a" style="left:678px;top:214px" width="7" height="10" viewBox="0 0 7 10"><path d="M1 1L5 5L1 9" stroke="#404040" stroke-width="1.5" fill="none"/></svg><svg class="a" style="left:440px;top:226px" width="70" height="8" viewBox="440 226 70 8"><path d="M450.5 228V232.5M500.5 228V232.5" stroke="#a0a0a0"/><path d="M462 229.5H490" stroke="#808080" stroke-dasharray="1 1"/><path d="M453 228L460 228L456.5 232Z M492 228L499 228L495.5 232Z" fill="#505050"/></svg><div class="a" style="left:245px;top:232px;width:464px;height:362px;background:#f0f0f0;"></div><div class="a" style="left:245px;top:232px;width:464px;height:1px;background:#a0a0a0;"></div><div class="a" style="left:245px;top:232px;width:1px;height:362px;background:#a0a0a0;"></div><div class="a" style="left:246px;top:233px;width:1px;height:361px;background:#ffffff;"></div><div class="a" style="left:706px;top:232px;width:1px;height:362px;background:#c8c8c8;"></div><svg class="a" style="left:0;top:0" width="935" height="594"><defs><linearGradient id="g0" gradientUnits="userSpaceOnUse" x1="344.5" y1="349.3" x2="386.9" y2="347.8"><stop offset="0.00" stop-color="#2896eb"/><stop offset="0.12" stop-color="#2699e9"/><stop offset="0.25" stop-color="#259ce7"/><stop offset="0.38" stop-color="#23a0e5"/><stop offset="0.50" stop-color="#21a3e4"/><stop offset="0.62" stop-color="#1fa6e2"/><stop offset="0.75" stop-color="#1da9e0"/><stop offset="0.88" stop-color="#1aabdd"/><stop offset="1.00" stop-color="#17aeda"/></linearGradient><linearGradient id="g1" gradientUnits="userSpaceOnUse" x1="377.3" y1="343.5" x2="419.8" y2="341.6"><stop offset="0.00" stop-color="#1caadf"/><stop offset="0.12" stop-color="#1aacdd"/><stop offset="0.25" stop-color="#16afda"/><stop offset="0.38" stop-color="#12b1d6"/><stop offset="0.50" stop-color="#0cb3d3"/><stop offset="0.62" stop-color="#07b5cf"/><stop offset="0.75" stop-color="#03b7cb"/><stop offset="0.88" stop-color="#01b9c7"/><stop offset="1.00" stop-color="#02bac3"/></linearGradient><linearGradient id="g2" gradientUnits="userSpaceOnUse" x1="414.8" y1="345.6" x2="457.0" y2="327.5"><stop offset="0.00" stop-color="#01b8c8"/><stop offset="0.12" stop-color="#02bac5"/><stop offset="0.25" stop-color="#05bbc1"/><stop offset="0.38" stop-color="#0abdbd"/><stop offset="0.50" stop-color="#12beb9"/><stop offset="0.62" stop-color="#19bfb5"/><stop offset="0.75" stop-color="#20c1b1"/><stop offset="0.88" stop-color="#25c2ad"/><stop offset="1.00" stop-color="#2ac3a9"/></linearGradient><linearGradient id="g3" gradientUnits="userSpaceOnUse" x1="448.0" y1="342.8" x2="490.4" y2="318.5"><stop offset="0.00" stop-color="#19bfb6"/><stop offset="0.12" stop-color="#23c1af"/><stop offset="0.25" stop-color="#2ac3a8"/><stop offset="0.38" stop-color="#30c5a1"/><stop offset="0.50" stop-color="#35c79a"/><stop offset="0.62" stop-color="#3cc992"/><stop offset="0.75" stop-color="#44cb89"/><stop offset="0.88" stop-color="#4fcc80"/><stop offset="1.00" stop-color="#5bcc77"/></linearGradient><linearGradient id="g4" gradientUnits="userSpaceOnUse" x1="480.5" y1="333.5" x2="525.9" y2="306.8"><stop offset="0.00" stop-color="#3bc992"/><stop offset="0.12" stop-color="#49cb85"/><stop offset="0.25" stop-color="#5acc77"/><stop offset="0.38" stop-color="#6ccd68"/><stop offset="0.50" stop-color="#80cc59"/><stop offset="0.62" stop-color="#94ca4a"/><stop offset="0.75" stop-color="#a7c73c"/><stop offset="0.88" stop-color="#b9c431"/><stop offset="1.00" stop-color="#cac129"/></linearGradient><linearGradient id="g5" gradientUnits="userSpaceOnUse" x1="335.4" y1="372.4" x2="379.4" y2="356.0"><stop offset="0.00" stop-color="#2c8ef2"/><stop offset="0.12" stop-color="#2b91ef"/><stop offset="0.25" stop-color="#2895ec"/><stop offset="0.38" stop-color="#2699e9"/><stop offset="0.50" stop-color="#259ce7"/><stop offset="0.62" stop-color="#23a0e5"/><stop offset="0.75" stop-color="#21a3e3"/><stop offset="0.88" stop-color="#1fa6e1"/><stop offset="1.00" stop-color="#1caadf"/></linearGradient><linearGradient id="g6" gradientUnits="userSpaceOnUse" x1="511.0" y1="312.4" x2="562.0" y2="293.8"><stop offset="0.00" stop-color="#94ca4a"/><stop offset="0.12" stop-color="#b0c636"/><stop offset="0.25" stop-color="#c9c129"/><stop offset="0.38" stop-color="#dfbc2a"/><stop offset="0.50" stop-color="#f2ba38"/><stop offset="0.62" stop-color="#febf3b"/><stop offset="0.75" stop-color="#fdcb33"/><stop offset="0.88" stop-color="#f9d92a"/><stop offset="1.00" stop-color="#f5e921"/></linearGradient><linearGradient id="g7" gradientUnits="userSpaceOnUse" x1="372.9" y1="370.0" x2="412.9" y2="345.1"><stop offset="0.00" stop-color="#21a3e4"/><stop offset="0.12" stop-color="#1fa6e2"/><stop offset="0.25" stop-color="#1ca9e0"/><stop offset="0.38" stop-color="#1aacdd"/><stop offset="0.50" stop-color="#16afd9"/><stop offset="0.62" stop-color="#11b2d5"/><stop offset="0.75" stop-color="#09b4d1"/><stop offset="0.88" stop-color="#04b6cd"/><stop offset="1.00" stop-color="#01b8c8"/></linearGradient><linearGradient id="g8" gradientUnits="userSpaceOnUse" x1="545.5" y1="304.6" x2="584.3" y2="277.2"><stop offset="0.00" stop-color="#fec735"/><stop offset="0.12" stop-color="#fdce31"/><stop offset="0.25" stop-color="#fad52d"/><stop offset="0.38" stop-color="#f7dd28"/><stop offset="0.50" stop-color="#f5e523"/><stop offset="0.62" stop-color="#f5ee1e"/><stop offset="0.75" stop-color="#f5f816"/><stop offset="0.88" stop-color="#f7fc0f"/><stop offset="1.00" stop-color="#f9fb15"/></linearGradient><linearGradient id="g9" gradientUnits="userSpaceOnUse" x1="415.4" y1="370.3" x2="437.4" y2="336.8"><stop offset="0.00" stop-color="#11b1d6"/><stop offset="0.12" stop-color="#0bb4d2"/><stop offset="0.25" stop-color="#05b6ce"/><stop offset="0.38" stop-color="#01b7ca"/><stop offset="0.50" stop-color="#01b9c6"/><stop offset="0.62" stop-color="#03bbc2"/><stop offset="0.75" stop-color="#09bcbe"/><stop offset="0.88" stop-color="#10beba"/><stop offset="1.00" stop-color="#19bfb6"/></linearGradient><linearGradient id="g10" gradientUnits="userSpaceOnUse" x1="444.7" y1="366.0" x2="477.0" y2="332.0"><stop offset="0.00" stop-color="#01b9c7"/><stop offset="0.12" stop-color="#05bbc1"/><stop offset="0.25" stop-color="#0ebebb"/><stop offset="0.38" stop-color="#1ac0b5"/><stop offset="0.50" stop-color="#24c1ae"/><stop offset="0.62" stop-color="#2bc3a8"/><stop offset="0.75" stop-color="#30c5a1"/><stop offset="0.88" stop-color="#35c79a"/><stop offset="1.00" stop-color="#3bc992"/></linearGradient><linearGradient id="g11" gradientUnits="userSpaceOnUse" x1="476.1" y1="357.7" x2="514.7" y2="323.0"><stop offset="0.00" stop-color="#27c2ac"/><stop offset="0.12" stop-color="#2fc5a2"/><stop offset="0.25" stop-color="#36c898"/><stop offset="0.38" stop-color="#40ca8d"/><stop offset="0.50" stop-color="#4fcc81"/><stop offset="0.62" stop-color="#5fcd73"/><stop offset="0.75" stop-color="#70cd65"/><stop offset="0.88" stop-color="#82cc58"/><stop offset="1.00" stop-color="#94ca4a"/></linearGradient><linearGradient id="g12" gradientUnits="userSpaceOnUse" x1="330.7" y1="395.6" x2="369.0" y2="366.8"><stop offset="0.00" stop-color="#2f81fa"/><stop offset="0.12" stop-color="#2e85f8"/><stop offset="0.25" stop-color="#2d8af5"/><stop offset="0.38" stop-color="#2c8ef1"/><stop offset="0.50" stop-color="#2a93ee"/><stop offset="0.62" stop-color="#2797eb"/><stop offset="0.75" stop-color="#259be8"/><stop offset="0.88" stop-color="#249fe6"/><stop offset="1.00" stop-color="#21a3e4"/></linearGradient><linearGradient id="g13" gradientUnits="userSpaceOnUse" x1="504.3" y1="339.6" x2="554.6" y2="311.0"><stop offset="0.00" stop-color="#58cc79"/><stop offset="0.12" stop-color="#72cd63"/><stop offset="0.25" stop-color="#8fcb4e"/><stop offset="0.38" stop-color="#abc739"/><stop offset="0.50" stop-color="#c4c22b"/><stop offset="0.62" stop-color="#dbbd28"/><stop offset="0.75" stop-color="#eeba34"/><stop offset="0.88" stop-color="#fdbd3d"/><stop offset="1.00" stop-color="#fec735"/></linearGradient><linearGradient id="g14" gradientUnits="userSpaceOnUse" x1="370.5" y1="391.9" x2="398.9" y2="358.3"><stop offset="0.00" stop-color="#2798ea"/><stop offset="0.12" stop-color="#259be7"/><stop offset="0.25" stop-color="#249fe6"/><stop offset="0.38" stop-color="#22a2e4"/><stop offset="0.50" stop-color="#1fa6e2"/><stop offset="0.62" stop-color="#1da9e0"/><stop offset="0.75" stop-color="#1aacdd"/><stop offset="0.88" stop-color="#16afd9"/><stop offset="1.00" stop-color="#11b1d6"/></linearGradient><linearGradient id="g15" gradientUnits="userSpaceOnUse" x1="534.5" y1="315.1" x2="581.5" y2="298.8"><stop offset="0.00" stop-color="#dfbc2a"/><stop offset="0.12" stop-color="#efba35"/><stop offset="0.25" stop-color="#fcbd3d"/><stop offset="0.38" stop-color="#fec536"/><stop offset="0.50" stop-color="#fcd030"/><stop offset="0.62" stop-color="#f7dd28"/><stop offset="0.75" stop-color="#f5eb20"/><stop offset="0.88" stop-color="#f6f914"/><stop offset="1.00" stop-color="#f9fb15"/></linearGradient><linearGradient id="g16" gradientUnits="userSpaceOnUse" x1="412.6" y1="387.6" x2="425.0" y2="355.5"><stop offset="0.00" stop-color="#1ea7e1"/><stop offset="0.12" stop-color="#1caadf"/><stop offset="0.25" stop-color="#19acdc"/><stop offset="0.38" stop-color="#16afda"/><stop offset="0.50" stop-color="#12b1d6"/><stop offset="0.62" stop-color="#0cb3d3"/><stop offset="0.75" stop-color="#06b5cf"/><stop offset="0.88" stop-color="#02b7cb"/><stop offset="1.00" stop-color="#01b9c7"/></linearGradient><linearGradient id="g17" gradientUnits="userSpaceOnUse" x1="443.0" y1="387.3" x2="463.2" y2="350.0"><stop offset="0.00" stop-color="#18aedb"/><stop offset="0.12" stop-color="#12b1d6"/><stop offset="0.25" stop-color="#08b4d1"/><stop offset="0.38" stop-color="#02b7cb"/><stop offset="0.50" stop-color="#01bac5"/><stop offset="0.62" stop-color="#08bcbf"/><stop offset="0.75" stop-color="#13beb9"/><stop offset="0.88" stop-color="#1ec0b2"/><stop offset="1.00" stop-color="#27c2ac"/></linearGradient><linearGradient id="g18" gradientUnits="userSpaceOnUse" x1="473.6" y1="382.5" x2="501.1" y2="341.8"><stop offset="0.00" stop-color="#01b8c8"/><stop offset="0.12" stop-color="#06bcc0"/><stop offset="0.25" stop-color="#14bfb8"/><stop offset="0.38" stop-color="#23c1af"/><stop offset="0.50" stop-color="#2dc4a6"/><stop offset="0.62" stop-color="#34c79c"/><stop offset="0.75" stop-color="#3cc992"/><stop offset="0.88" stop-color="#48cb86"/><stop offset="1.00" stop-color="#58cc79"/></linearGradient><linearGradient id="g19" gradientUnits="userSpaceOnUse" x1="324.2" y1="416.9" x2="359.2" y2="383.5"><stop offset="0.00" stop-color="#406dfe"/><stop offset="0.12" stop-color="#3b73fe"/><stop offset="0.25" stop-color="#3579fd"/><stop offset="0.38" stop-color="#307efb"/><stop offset="0.50" stop-color="#2e84f9"/><stop offset="0.62" stop-color="#2d89f5"/><stop offset="0.75" stop-color="#2c8ef1"/><stop offset="0.88" stop-color="#2a93ed"/><stop offset="1.00" stop-color="#2798ea"/></linearGradient><linearGradient id="g20" gradientUnits="userSpaceOnUse" x1="496.6" y1="365.4" x2="545.3" y2="333.2"><stop offset="0.00" stop-color="#2cc4a7"/><stop offset="0.12" stop-color="#37c898"/><stop offset="0.25" stop-color="#48cb86"/><stop offset="0.38" stop-color="#60cd72"/><stop offset="0.50" stop-color="#7bcc5d"/><stop offset="0.62" stop-color="#97ca48"/><stop offset="0.75" stop-color="#b1c635"/><stop offset="0.88" stop-color="#cac129"/><stop offset="1.00" stop-color="#dfbc2a"/></linearGradient><linearGradient id="g21" gradientUnits="userSpaceOnUse" x1="364.1" y1="411.2" x2="389.1" y2="376.7"><stop offset="0.00" stop-color="#2d8af4"/><stop offset="0.12" stop-color="#2c8ef1"/><stop offset="0.25" stop-color="#2b92ee"/><stop offset="0.38" stop-color="#2896ec"/><stop offset="0.50" stop-color="#2699e9"/><stop offset="0.62" stop-color="#259de7"/><stop offset="0.75" stop-color="#23a0e5"/><stop offset="0.88" stop-color="#21a3e3"/><stop offset="1.00" stop-color="#1ea7e1"/></linearGradient><linearGradient id="g22" gradientUnits="userSpaceOnUse" x1="530.8" y1="326.5" x2="575.4" y2="323.1"><stop offset="0.00" stop-color="#a0c841"/><stop offset="0.12" stop-color="#c0c32d"/><stop offset="0.25" stop-color="#dbbd29"/><stop offset="0.38" stop-color="#f2ba37"/><stop offset="0.50" stop-color="#fec13a"/><stop offset="0.62" stop-color="#fccf30"/><stop offset="0.75" stop-color="#f6e126"/><stop offset="0.88" stop-color="#f5f518"/><stop offset="1.00" stop-color="#f9fb15"/></linearGradient><linearGradient id="g23" gradientUnits="userSpaceOnUse" x1="406.7" y1="405.5" x2="415.3" y2="376.6"><stop offset="0.00" stop-color="#269ae8"/><stop offset="0.12" stop-color="#259de7"/><stop offset="0.25" stop-color="#23a0e5"/><stop offset="0.38" stop-color="#22a2e4"/><stop offset="0.50" stop-color="#20a4e3"/><stop offset="0.62" stop-color="#1ea7e1"/><stop offset="0.75" stop-color="#1ca9df"/><stop offset="0.88" stop-color="#1aabdd"/><stop offset="1.00" stop-color="#18aedb"/></linearGradient><linearGradient id="g24" gradientUnits="userSpaceOnUse" x1="579.3" y1="329.9" x2="592.6" y2="303.4"><stop offset="0.00" stop-color="#f6f914"/><stop offset="0.12" stop-color="#f6fa13"/><stop offset="0.25" stop-color="#f7fb11"/><stop offset="0.38" stop-color="#f7fc10"/><stop offset="0.50" stop-color="#f7fc10"/><stop offset="0.62" stop-color="#f8fc11"/><stop offset="0.75" stop-color="#f8fb12"/><stop offset="0.88" stop-color="#f9fb13"/><stop offset="1.00" stop-color="#f9fb15"/></linearGradient><linearGradient id="g25" gradientUnits="userSpaceOnUse" x1="437.1" y1="406.8" x2="453.7" y2="371.6"><stop offset="0.00" stop-color="#23a0e5"/><stop offset="0.12" stop-color="#21a4e3"/><stop offset="0.25" stop-color="#1ea7e1"/><stop offset="0.38" stop-color="#1babde"/><stop offset="0.50" stop-color="#18aedb"/><stop offset="0.62" stop-color="#12b1d7"/><stop offset="0.75" stop-color="#0bb3d2"/><stop offset="0.88" stop-color="#05b6cd"/><stop offset="1.00" stop-color="#01b8c8"/></linearGradient><linearGradient id="g26" gradientUnits="userSpaceOnUse" x1="464.7" y1="403.8" x2="493.7" y2="365.7"><stop offset="0.00" stop-color="#1babde"/><stop offset="0.12" stop-color="#15afd9"/><stop offset="0.25" stop-color="#0cb3d3"/><stop offset="0.38" stop-color="#03b7cc"/><stop offset="0.50" stop-color="#01bac5"/><stop offset="0.62" stop-color="#09bcbe"/><stop offset="0.75" stop-color="#17bfb6"/><stop offset="0.88" stop-color="#23c1af"/><stop offset="1.00" stop-color="#2cc4a7"/></linearGradient><linearGradient id="g27" gradientUnits="userSpaceOnUse" x1="321.6" y1="439.3" x2="348.7" y2="399.9"><stop offset="0.00" stop-color="#4756f6"/><stop offset="0.12" stop-color="#475cfa"/><stop offset="0.25" stop-color="#4562fc"/><stop offset="0.38" stop-color="#4269fe"/><stop offset="0.50" stop-color="#3e70ff"/><stop offset="0.62" stop-color="#3777fe"/><stop offset="0.75" stop-color="#317efb"/><stop offset="0.88" stop-color="#2e84f8"/><stop offset="1.00" stop-color="#2d8af4"/></linearGradient><linearGradient id="g28" gradientUnits="userSpaceOnUse" x1="488.3" y1="380.3" x2="538.0" y2="362.9"><stop offset="0.00" stop-color="#03bbc2"/><stop offset="0.12" stop-color="#18bfb6"/><stop offset="0.25" stop-color="#29c3a9"/><stop offset="0.38" stop-color="#34c79c"/><stop offset="0.50" stop-color="#41ca8c"/><stop offset="0.62" stop-color="#56cc7b"/><stop offset="0.75" stop-color="#6dcd67"/><stop offset="0.88" stop-color="#87cb54"/><stop offset="1.00" stop-color="#a0c841"/></linearGradient><linearGradient id="g29" gradientUnits="userSpaceOnUse" x1="359.4" y1="433.5" x2="377.9" y2="395.8"><stop offset="0.00" stop-color="#3d71ff"/><stop offset="0.12" stop-color="#3777fe"/><stop offset="0.25" stop-color="#327cfc"/><stop offset="0.38" stop-color="#2f82fa"/><stop offset="0.50" stop-color="#2e87f7"/><stop offset="0.62" stop-color="#2d8cf3"/><stop offset="0.75" stop-color="#2b91ef"/><stop offset="0.88" stop-color="#2896ec"/><stop offset="1.00" stop-color="#269ae8"/></linearGradient><linearGradient id="g30" gradientUnits="userSpaceOnUse" x1="528.7" y1="343.0" x2="565.6" y2="346.2"><stop offset="0.00" stop-color="#6ccd69"/><stop offset="0.12" stop-color="#91ca4c"/><stop offset="0.25" stop-color="#b5c533"/><stop offset="0.38" stop-color="#d5be28"/><stop offset="0.50" stop-color="#efba35"/><stop offset="0.62" stop-color="#fec03a"/><stop offset="0.75" stop-color="#fcd030"/><stop offset="0.88" stop-color="#f6e424"/><stop offset="1.00" stop-color="#f6f914"/></linearGradient><linearGradient id="g31" gradientUnits="userSpaceOnUse" x1="397.1" y1="428.7" x2="407.8" y2="397.6"><stop offset="0.00" stop-color="#2e87f7"/><stop offset="0.12" stop-color="#2d8af4"/><stop offset="0.25" stop-color="#2c8ef2"/><stop offset="0.38" stop-color="#2b91ef"/><stop offset="0.50" stop-color="#2994ed"/><stop offset="0.62" stop-color="#2797eb"/><stop offset="0.75" stop-color="#269ae8"/><stop offset="0.88" stop-color="#249de7"/><stop offset="1.00" stop-color="#23a0e5"/></linearGradient><linearGradient id="g32" gradientUnits="userSpaceOnUse" x1="559.5" y1="343.0" x2="593.3" y2="316.0"><stop offset="0.00" stop-color="#f6e125"/><stop offset="0.12" stop-color="#f5e623"/><stop offset="0.25" stop-color="#f5eb20"/><stop offset="0.38" stop-color="#f5f01d"/><stop offset="0.50" stop-color="#f5f518"/><stop offset="0.62" stop-color="#f6f914"/><stop offset="0.75" stop-color="#f7fb10"/><stop offset="0.88" stop-color="#f8fc11"/><stop offset="1.00" stop-color="#f9fb15"/></linearGradient><linearGradient id="g33" gradientUnits="userSpaceOnUse" x1="426.9" y1="426.0" x2="447.7" y2="392.6"><stop offset="0.00" stop-color="#2994ed"/><stop offset="0.12" stop-color="#2797ea"/><stop offset="0.25" stop-color="#269ae8"/><stop offset="0.38" stop-color="#249de6"/><stop offset="0.50" stop-color="#23a0e5"/><stop offset="0.62" stop-color="#21a3e3"/><stop offset="0.75" stop-color="#1fa6e2"/><stop offset="0.88" stop-color="#1da8e0"/><stop offset="1.00" stop-color="#1babde"/></linearGradient><linearGradient id="g34" gradientUnits="userSpaceOnUse" x1="453.5" y1="419.4" x2="490.7" y2="388.7"><stop offset="0.00" stop-color="#23a1e5"/><stop offset="0.12" stop-color="#20a5e3"/><stop offset="0.25" stop-color="#1da9e0"/><stop offset="0.38" stop-color="#19acdc"/><stop offset="0.50" stop-color="#14b0d8"/><stop offset="0.62" stop-color="#0cb3d3"/><stop offset="0.75" stop-color="#05b6ce"/><stop offset="0.88" stop-color="#01b8c8"/><stop offset="1.00" stop-color="#03bbc2"/></linearGradient><linearGradient id="g35" gradientUnits="userSpaceOnUse" x1="316.0" y1="462.8" x2="338.6" y2="422.0"><stop offset="0.00" stop-color="#463bdc"/><stop offset="0.12" stop-color="#4741e5"/><stop offset="0.25" stop-color="#4848ec"/><stop offset="0.38" stop-color="#484ff1"/><stop offset="0.50" stop-color="#4755f6"/><stop offset="0.62" stop-color="#475cfa"/><stop offset="0.75" stop-color="#4563fc"/><stop offset="0.88" stop-color="#4269fe"/><stop offset="1.00" stop-color="#3d71ff"/></linearGradient><linearGradient id="g36" gradientUnits="userSpaceOnUse" x1="483.1" y1="393.4" x2="528.1" y2="389.1"><stop offset="0.00" stop-color="#0eb3d4"/><stop offset="0.12" stop-color="#01b8ca"/><stop offset="0.25" stop-color="#08bcbf"/><stop offset="0.38" stop-color="#1cc0b3"/><stop offset="0.50" stop-color="#2cc4a7"/><stop offset="0.62" stop-color="#35c79a"/><stop offset="0.75" stop-color="#42ca8b"/><stop offset="0.88" stop-color="#56cc7b"/><stop offset="1.00" stop-color="#6ccd69"/></linearGradient><linearGradient id="g37" gradientUnits="userSpaceOnUse" x1="351.3" y1="456.4" x2="371.0" y2="416.8"><stop offset="0.00" stop-color="#4854f5"/><stop offset="0.12" stop-color="#475af9"/><stop offset="0.25" stop-color="#4660fc"/><stop offset="0.38" stop-color="#4367fd"/><stop offset="0.50" stop-color="#406dfe"/><stop offset="0.62" stop-color="#3a74fe"/><stop offset="0.75" stop-color="#337bfd"/><stop offset="0.88" stop-color="#2f81fa"/><stop offset="1.00" stop-color="#2e87f7"/></linearGradient><linearGradient id="g38" gradientUnits="userSpaceOnUse" x1="526.1" y1="360.0" x2="553.2" y2="366.6"><stop offset="0.00" stop-color="#49cb85"/><stop offset="0.12" stop-color="#6acd6a"/><stop offset="0.25" stop-color="#90ca4d"/><stop offset="0.38" stop-color="#b3c534"/><stop offset="0.50" stop-color="#d3bf27"/><stop offset="0.62" stop-color="#edba33"/><stop offset="0.75" stop-color="#febf3b"/><stop offset="0.88" stop-color="#fdce31"/><stop offset="1.00" stop-color="#f6e125"/></linearGradient><linearGradient id="g39" gradientUnits="userSpaceOnUse" x1="387.4" y1="450.6" x2="402.8" y2="414.5"><stop offset="0.00" stop-color="#406dfe"/><stop offset="0.12" stop-color="#3c72ff"/><stop offset="0.25" stop-color="#3677fe"/><stop offset="0.38" stop-color="#317dfc"/><stop offset="0.50" stop-color="#2f82fa"/><stop offset="0.62" stop-color="#2e87f7"/><stop offset="0.75" stop-color="#2d8bf4"/><stop offset="0.88" stop-color="#2c90f0"/><stop offset="1.00" stop-color="#2994ed"/></linearGradient><linearGradient id="g40" gradientUnits="userSpaceOnUse" x1="551.2" y1="339.7" x2="591.0" y2="341.4"><stop offset="0.00" stop-color="#fbd22f"/><stop offset="0.12" stop-color="#f9d82b"/><stop offset="0.25" stop-color="#f7df27"/><stop offset="0.38" stop-color="#f5e523"/><stop offset="0.50" stop-color="#f5ed1f"/><stop offset="0.62" stop-color="#f5f41a"/><stop offset="0.75" stop-color="#f6fa13"/><stop offset="0.88" stop-color="#f7fc10"/><stop offset="1.00" stop-color="#f9fb15"/></linearGradient><linearGradient id="g41" gradientUnits="userSpaceOnUse" x1="418.9" y1="446.9" x2="439.1" y2="411.6"><stop offset="0.00" stop-color="#2f81fa"/><stop offset="0.12" stop-color="#2e85f8"/><stop offset="0.25" stop-color="#2d8af5"/><stop offset="0.38" stop-color="#2c8ef2"/><stop offset="0.50" stop-color="#2b92ef"/><stop offset="0.62" stop-color="#2896ec"/><stop offset="0.75" stop-color="#2699e9"/><stop offset="0.88" stop-color="#259de7"/><stop offset="1.00" stop-color="#23a1e5"/></linearGradient><linearGradient id="g42" gradientUnits="userSpaceOnUse" x1="444.1" y1="437.4" x2="482.7" y2="408.5"><stop offset="0.00" stop-color="#2994ed"/><stop offset="0.12" stop-color="#2698ea"/><stop offset="0.25" stop-color="#259ce7"/><stop offset="0.38" stop-color="#23a0e5"/><stop offset="0.50" stop-color="#20a5e3"/><stop offset="0.62" stop-color="#1da8e0"/><stop offset="0.75" stop-color="#1aacdd"/><stop offset="0.88" stop-color="#15afd8"/><stop offset="1.00" stop-color="#0eb3d4"/></linearGradient><linearGradient id="g43" gradientUnits="userSpaceOnUse" x1="309.2" y1="485.8" x2="330.4" y2="445.2"><stop offset="0.00" stop-color="#3e26a8"/><stop offset="0.12" stop-color="#402bb6"/><stop offset="0.25" stop-color="#4230c3"/><stop offset="0.38" stop-color="#4435d0"/><stop offset="0.50" stop-color="#463adb"/><stop offset="0.62" stop-color="#4740e4"/><stop offset="0.75" stop-color="#4747eb"/><stop offset="0.88" stop-color="#484ef1"/><stop offset="1.00" stop-color="#4854f5"/></linearGradient><linearGradient id="g44" gradientUnits="userSpaceOnUse" x1="478.9" y1="407.2" x2="516.7" y2="410.8"><stop offset="0.00" stop-color="#1caadf"/><stop offset="0.12" stop-color="#13b0d7"/><stop offset="0.25" stop-color="#05b6ce"/><stop offset="0.38" stop-color="#02bac4"/><stop offset="0.50" stop-color="#13beb9"/><stop offset="0.62" stop-color="#25c2ad"/><stop offset="0.75" stop-color="#30c5a1"/><stop offset="0.88" stop-color="#3ac994"/><stop offset="1.00" stop-color="#49cb85"/></linearGradient><linearGradient id="g45" gradientUnits="userSpaceOnUse" x1="343.0" y1="479.8" x2="364.3" y2="439.2"><stop offset="0.00" stop-color="#4538d8"/><stop offset="0.12" stop-color="#473ee1"/><stop offset="0.25" stop-color="#4745e9"/><stop offset="0.38" stop-color="#484bef"/><stop offset="0.50" stop-color="#4852f4"/><stop offset="0.62" stop-color="#4758f8"/><stop offset="0.75" stop-color="#465ffb"/><stop offset="0.88" stop-color="#4466fd"/><stop offset="1.00" stop-color="#406dfe"/></linearGradient><linearGradient id="g46" gradientUnits="userSpaceOnUse" x1="521.5" y1="376.9" x2="543.1" y2="384.1"><stop offset="0.00" stop-color="#38c895"/><stop offset="0.12" stop-color="#53cc7d"/><stop offset="0.25" stop-color="#75cc61"/><stop offset="0.38" stop-color="#9ac945"/><stop offset="0.50" stop-color="#bcc42f"/><stop offset="0.62" stop-color="#dabd28"/><stop offset="0.75" stop-color="#f2ba38"/><stop offset="0.88" stop-color="#fec239"/><stop offset="1.00" stop-color="#fbd22f"/></linearGradient><linearGradient id="g47" gradientUnits="userSpaceOnUse" x1="378.9" y1="473.1" x2="396.7" y2="434.6"><stop offset="0.00" stop-color="#4851f4"/><stop offset="0.12" stop-color="#4757f7"/><stop offset="0.25" stop-color="#465dfa"/><stop offset="0.38" stop-color="#4563fc"/><stop offset="0.50" stop-color="#4369fe"/><stop offset="0.62" stop-color="#3e6fff"/><stop offset="0.75" stop-color="#3975fe"/><stop offset="0.88" stop-color="#327bfc"/><stop offset="1.00" stop-color="#2f81fa"/></linearGradient><linearGradient id="g48" gradientUnits="userSpaceOnUse" x1="548.1" y1="351.3" x2="581.4" y2="358.8"><stop offset="0.00" stop-color="#fec635"/><stop offset="0.12" stop-color="#fdcd31"/><stop offset="0.25" stop-color="#fad52d"/><stop offset="0.38" stop-color="#f7dd28"/><stop offset="0.50" stop-color="#f5e524"/><stop offset="0.62" stop-color="#f5ee1e"/><stop offset="0.75" stop-color="#f5f716"/><stop offset="0.88" stop-color="#f7fc0f"/><stop offset="1.00" stop-color="#f9fb15"/></linearGradient><linearGradient id="g49" gradientUnits="userSpaceOnUse" x1="411.7" y1="467.9" x2="432.1" y2="429.7"><stop offset="0.00" stop-color="#4367fd"/><stop offset="0.12" stop-color="#406dfe"/><stop offset="0.25" stop-color="#3a73fe"/><stop offset="0.38" stop-color="#3479fd"/><stop offset="0.50" stop-color="#307ffb"/><stop offset="0.62" stop-color="#2e85f8"/><stop offset="0.75" stop-color="#2d8af5"/><stop offset="0.88" stop-color="#2c8ff1"/><stop offset="1.00" stop-color="#2994ed"/></linearGradient><linearGradient id="g50" gradientUnits="userSpaceOnUse" x1="438.2" y1="460.3" x2="472.6" y2="424.9"><stop offset="0.00" stop-color="#307ffb"/><stop offset="0.12" stop-color="#2e85f8"/><stop offset="0.25" stop-color="#2d8bf4"/><stop offset="0.38" stop-color="#2b91ef"/><stop offset="0.50" stop-color="#2896eb"/><stop offset="0.62" stop-color="#259be8"/><stop offset="0.75" stop-color="#23a0e5"/><stop offset="0.88" stop-color="#1fa5e2"/><stop offset="1.00" stop-color="#1caadf"/></linearGradient><linearGradient id="g51" gradientUnits="userSpaceOnUse" x1="308.9" y1="493.4" x2="321.4" y2="464.3"><stop offset="0.00" stop-color="#3e26a8"/><stop offset="0.12" stop-color="#3f28af"/><stop offset="0.25" stop-color="#402ab5"/><stop offset="0.38" stop-color="#412dbb"/><stop offset="0.50" stop-color="#422fc1"/><stop offset="0.62" stop-color="#4331c7"/><stop offset="0.75" stop-color="#4433cd"/><stop offset="0.88" stop-color="#4536d3"/><stop offset="1.00" stop-color="#4538d8"/></linearGradient><linearGradient id="g52" gradientUnits="userSpaceOnUse" x1="469.2" y1="426.5" x2="510.6" y2="426.7"><stop offset="0.00" stop-color="#259de7"/><stop offset="0.12" stop-color="#20a5e2"/><stop offset="0.25" stop-color="#19acdc"/><stop offset="0.38" stop-color="#0db3d3"/><stop offset="0.50" stop-color="#01b8c8"/><stop offset="0.62" stop-color="#0bbdbd"/><stop offset="0.75" stop-color="#21c1b1"/><stop offset="0.88" stop-color="#2ec5a4"/><stop offset="1.00" stop-color="#38c895"/></linearGradient><linearGradient id="g53" gradientUnits="userSpaceOnUse" x1="334.3" y1="501.5" x2="358.4" y2="461.8"><stop offset="0.00" stop-color="#3e26a8"/><stop offset="0.12" stop-color="#402bb6"/><stop offset="0.25" stop-color="#422fc2"/><stop offset="0.38" stop-color="#4434ce"/><stop offset="0.50" stop-color="#4539d9"/><stop offset="0.62" stop-color="#473fe2"/><stop offset="0.75" stop-color="#4745e9"/><stop offset="0.88" stop-color="#484bef"/><stop offset="1.00" stop-color="#4851f4"/></linearGradient><linearGradient id="g54" gradientUnits="userSpaceOnUse" x1="513.0" y1="393.7" x2="536.4" y2="400.8"><stop offset="0.00" stop-color="#2dc4a6"/><stop offset="0.12" stop-color="#3dc991"/><stop offset="0.25" stop-color="#5acc77"/><stop offset="0.38" stop-color="#7ecc5b"/><stop offset="0.50" stop-color="#a3c83f"/><stop offset="0.62" stop-color="#c5c22a"/><stop offset="0.75" stop-color="#e1bc2b"/><stop offset="0.88" stop-color="#f8ba3d"/><stop offset="1.00" stop-color="#fec635"/></linearGradient><linearGradient id="g55" gradientUnits="userSpaceOnUse" x1="369.1" y1="495.5" x2="391.1" y2="456.7"><stop offset="0.00" stop-color="#4539d9"/><stop offset="0.12" stop-color="#473ee1"/><stop offset="0.25" stop-color="#4744e8"/><stop offset="0.38" stop-color="#484aee"/><stop offset="0.50" stop-color="#4850f2"/><stop offset="0.62" stop-color="#4756f6"/><stop offset="0.75" stop-color="#475bfa"/><stop offset="0.88" stop-color="#4561fc"/><stop offset="1.00" stop-color="#4367fd"/></linearGradient><linearGradient id="g56" gradientUnits="userSpaceOnUse" x1="542.1" y1="365.8" x2="572.9" y2="373.8"><stop offset="0.00" stop-color="#fcbd3d"/><stop offset="0.12" stop-color="#fec338"/><stop offset="0.25" stop-color="#fdca33"/><stop offset="0.38" stop-color="#fbd42e"/><stop offset="0.50" stop-color="#f7dd28"/><stop offset="0.62" stop-color="#f5e822"/><stop offset="0.75" stop-color="#f5f31a"/><stop offset="0.88" stop-color="#f7fb11"/><stop offset="1.00" stop-color="#f9fb15"/></linearGradient><linearGradient id="g57" gradientUnits="userSpaceOnUse" x1="399.6" y1="488.8" x2="428.0" y2="451.7"><stop offset="0.00" stop-color="#4851f3"/><stop offset="0.12" stop-color="#4756f7"/><stop offset="0.25" stop-color="#475cfa"/><stop offset="0.38" stop-color="#4562fc"/><stop offset="0.50" stop-color="#4367fd"/><stop offset="0.62" stop-color="#406dfe"/><stop offset="0.75" stop-color="#3a73fe"/><stop offset="0.88" stop-color="#3479fd"/><stop offset="1.00" stop-color="#307ffb"/></linearGradient><linearGradient id="g58" gradientUnits="userSpaceOnUse" x1="424.4" y1="471.0" x2="469.9" y2="451.6"><stop offset="0.00" stop-color="#406dfe"/><stop offset="0.12" stop-color="#3a73fe"/><stop offset="0.25" stop-color="#347afd"/><stop offset="0.38" stop-color="#2f80fa"/><stop offset="0.50" stop-color="#2e87f7"/><stop offset="0.62" stop-color="#2d8cf3"/><stop offset="0.75" stop-color="#2b92ee"/><stop offset="0.88" stop-color="#2797ea"/><stop offset="1.00" stop-color="#259de7"/></linearGradient><linearGradient id="g59" gradientUnits="userSpaceOnUse" x1="465.1" y1="442.0" x2="501.4" y2="446.5"><stop offset="0.00" stop-color="#2994ed"/><stop offset="0.12" stop-color="#259ce7"/><stop offset="0.25" stop-color="#20a4e3"/><stop offset="0.38" stop-color="#1aacdd"/><stop offset="0.50" stop-color="#0eb2d4"/><stop offset="0.62" stop-color="#01b8ca"/><stop offset="0.75" stop-color="#08bcbe"/><stop offset="0.88" stop-color="#1dc0b3"/><stop offset="1.00" stop-color="#2dc4a6"/></linearGradient><linearGradient id="g60" gradientUnits="userSpaceOnUse" x1="333.3" y1="510.1" x2="351.9" y2="479.4"><stop offset="0.00" stop-color="#3e26a8"/><stop offset="0.12" stop-color="#3f28af"/><stop offset="0.25" stop-color="#402bb6"/><stop offset="0.38" stop-color="#412dbc"/><stop offset="0.50" stop-color="#422fc2"/><stop offset="0.62" stop-color="#4332c8"/><stop offset="0.75" stop-color="#4434ce"/><stop offset="0.88" stop-color="#4536d4"/><stop offset="1.00" stop-color="#4539d9"/></linearGradient><linearGradient id="g61" gradientUnits="userSpaceOnUse" x1="496.7" y1="417.4" x2="540.9" y2="414.8"><stop offset="0.00" stop-color="#17bfb6"/><stop offset="0.12" stop-color="#2fc5a3"/><stop offset="0.25" stop-color="#40ca8d"/><stop offset="0.38" stop-color="#60cd72"/><stop offset="0.50" stop-color="#85cb55"/><stop offset="0.62" stop-color="#aac73a"/><stop offset="0.75" stop-color="#cbc029"/><stop offset="0.88" stop-color="#e7bb2e"/><stop offset="1.00" stop-color="#fcbd3d"/></linearGradient><linearGradient id="g62" gradientUnits="userSpaceOnUse" x1="356.9" y1="515.5" x2="387.5" y2="478.9"><stop offset="0.00" stop-color="#3f29b0"/><stop offset="0.12" stop-color="#412dbc"/><stop offset="0.25" stop-color="#4331c7"/><stop offset="0.38" stop-color="#4535d2"/><stop offset="0.50" stop-color="#463adb"/><stop offset="0.62" stop-color="#4740e3"/><stop offset="0.75" stop-color="#4745e9"/><stop offset="0.88" stop-color="#484bef"/><stop offset="1.00" stop-color="#4851f3"/></linearGradient><linearGradient id="g63" gradientUnits="userSpaceOnUse" x1="524.3" y1="400.2" x2="575.1" y2="378.4"><stop offset="0.00" stop-color="#cac129"/><stop offset="0.12" stop-color="#e0bc2a"/><stop offset="0.25" stop-color="#f2ba38"/><stop offset="0.38" stop-color="#febf3b"/><stop offset="0.50" stop-color="#fdca33"/><stop offset="0.62" stop-color="#f9d82b"/><stop offset="0.75" stop-color="#f5e722"/><stop offset="0.88" stop-color="#f6f915"/><stop offset="1.00" stop-color="#f9fb15"/></linearGradient><linearGradient id="g64" gradientUnits="userSpaceOnUse" x1="384.9" y1="502.8" x2="426.5" y2="475.9"><stop offset="0.00" stop-color="#473fe3"/><stop offset="0.12" stop-color="#4745e9"/><stop offset="0.25" stop-color="#484bee"/><stop offset="0.38" stop-color="#4850f3"/><stop offset="0.50" stop-color="#4756f6"/><stop offset="0.62" stop-color="#475bfa"/><stop offset="0.75" stop-color="#4561fc"/><stop offset="0.88" stop-color="#4367fd"/><stop offset="1.00" stop-color="#406dfe"/></linearGradient><linearGradient id="g65" gradientUnits="userSpaceOnUse" x1="576.0" y1="398.6" x2="588.7" y2="370.6"><stop offset="0.00" stop-color="#f5ec20"/><stop offset="0.12" stop-color="#f5f01d"/><stop offset="0.25" stop-color="#f5f41a"/><stop offset="0.38" stop-color="#f5f716"/><stop offset="0.50" stop-color="#f6fa13"/><stop offset="0.62" stop-color="#f7fb11"/><stop offset="0.75" stop-color="#f7fc10"/><stop offset="0.88" stop-color="#f8fb12"/><stop offset="1.00" stop-color="#f9fb15"/></linearGradient><linearGradient id="g66" gradientUnits="userSpaceOnUse" x1="419.1" y1="478.1" x2="461.2" y2="477.4"><stop offset="0.00" stop-color="#4660fc"/><stop offset="0.12" stop-color="#4367fd"/><stop offset="0.25" stop-color="#3f6efe"/><stop offset="0.38" stop-color="#3975fe"/><stop offset="0.50" stop-color="#327cfc"/><stop offset="0.62" stop-color="#2f82f9"/><stop offset="0.75" stop-color="#2d88f6"/><stop offset="0.88" stop-color="#2c8ef1"/><stop offset="1.00" stop-color="#2994ed"/></linearGradient><linearGradient id="g67" gradientUnits="userSpaceOnUse" x1="459.5" y1="457.5" x2="492.1" y2="464.3"><stop offset="0.00" stop-color="#2c8ef2"/><stop offset="0.12" stop-color="#2896ec"/><stop offset="0.25" stop-color="#249de6"/><stop offset="0.38" stop-color="#20a5e2"/><stop offset="0.50" stop-color="#1aacdd"/><stop offset="0.62" stop-color="#10b2d5"/><stop offset="0.75" stop-color="#03b7cb"/><stop offset="0.88" stop-color="#05bbc1"/><stop offset="1.00" stop-color="#17bfb6"/></linearGradient><linearGradient id="g68" gradientUnits="userSpaceOnUse" x1="489.3" y1="437.6" x2="533.1" y2="435.1"><stop offset="0.00" stop-color="#02bac3"/><stop offset="0.12" stop-color="#1bc0b4"/><stop offset="0.25" stop-color="#2ec4a4"/><stop offset="0.38" stop-color="#3bc992"/><stop offset="0.50" stop-color="#53cc7d"/><stop offset="0.62" stop-color="#70cd65"/><stop offset="0.75" stop-color="#90ca4d"/><stop offset="0.88" stop-color="#aec637"/><stop offset="1.00" stop-color="#cac129"/></linearGradient><linearGradient id="g69" gradientUnits="userSpaceOnUse" x1="518.0" y1="420.7" x2="569.7" y2="401.1"><stop offset="0.00" stop-color="#8ecb4f"/><stop offset="0.12" stop-color="#abc739"/><stop offset="0.25" stop-color="#c6c12a"/><stop offset="0.38" stop-color="#debc2a"/><stop offset="0.50" stop-color="#f2ba38"/><stop offset="0.62" stop-color="#fec03b"/><stop offset="0.75" stop-color="#fdcc32"/><stop offset="0.88" stop-color="#f8db29"/><stop offset="1.00" stop-color="#f5ec20"/></linearGradient><linearGradient id="g70" gradientUnits="userSpaceOnUse" x1="554.1" y1="413.4" x2="591.0" y2="384.3"><stop offset="0.00" stop-color="#fec934"/><stop offset="0.12" stop-color="#fcd030"/><stop offset="0.25" stop-color="#fad72c"/><stop offset="0.38" stop-color="#f7df27"/><stop offset="0.50" stop-color="#f5e723"/><stop offset="0.62" stop-color="#f5ef1e"/><stop offset="0.75" stop-color="#f6f816"/><stop offset="0.88" stop-color="#f7fc0f"/><stop offset="1.00" stop-color="#f9fb15"/></linearGradient></defs><polygon points="283.6,519.7 591.2,545.3 659.5,430.4 351.9,404.8" fill="#fff"/><polygon points="283.6,519.7 351.9,404.8 351.9,242.3 283.6,357.2" fill="#fff"/><polygon points="351.9,404.8 659.5,430.4 659.5,267.9 351.9,242.3" fill="#fff"/><path d="M591.2,545.3L659.5,430.4M557.0,542.5L625.3,427.6M522.8,539.6L591.1,424.7M488.7,536.8L557.0,421.9M454.5,533.9L522.8,419.0M420.3,531.1L488.6,416.2M386.1,528.2L454.4,413.3M352.0,525.4L420.3,410.5M317.8,522.5L386.1,407.6M291.2,506.9L598.8,532.5M298.8,494.2L606.4,519.8M306.4,481.4L614.0,507.0M314.0,468.6L621.6,494.2M321.5,455.9L629.1,481.5M329.1,443.1L636.7,468.7M336.7,430.3L644.3,455.9M344.3,417.6L651.9,443.2M291.2,506.9L291.2,344.4M298.8,494.2L298.8,331.7M306.4,481.4L306.4,318.9M314.0,468.6L314.0,306.1M321.5,455.9L321.5,293.4M329.1,443.1L329.1,280.6M336.7,430.3L336.7,267.8M344.3,417.6L344.3,255.1M283.6,506.2L351.9,391.3M283.6,479.1L351.9,364.2M283.6,452.0L351.9,337.1M283.6,424.9L351.9,310.0M283.6,397.8L351.9,282.9M283.6,370.7L351.9,255.8M659.5,430.4L659.5,267.9M625.3,427.6L625.3,265.1M591.1,424.7L591.1,262.2M557.0,421.9L557.0,259.4M522.8,419.0L522.8,256.5M488.6,416.2L488.6,253.7M454.4,413.3L454.4,250.8M420.3,410.5L420.3,248.0M386.1,407.6L386.1,245.1M351.9,391.3L659.5,416.9M351.9,364.2L659.5,389.8M351.9,337.1L659.5,362.7M351.9,310.0L659.5,335.6M351.9,282.9L659.5,308.5M351.9,255.8L659.5,281.4" stroke="#dcdcdc" stroke-width="1" fill="none"/><path d="M283.6,519.7L351.9,404.8M351.9,404.8L659.5,430.4M351.9,404.8L351.9,242.3M283.6,519.7L283.6,357.2M283.6,357.2L351.9,242.3M351.9,242.3L659.5,267.9M659.5,430.4L659.5,267.9M283.6,519.7L591.2,545.3M591.2,545.3L659.5,430.4" stroke="#262626" stroke-width="1" fill="none"/><path d="M591.2,545.3L587.0,552.4M557.0,542.5L552.8,549.6M522.8,539.6L518.6,546.7M488.7,536.8L484.4,543.9M454.5,533.9L450.2,541.1M420.3,531.1L416.1,538.2M386.1,528.2L381.9,535.4M352.0,525.4L347.7,532.5M317.8,522.5L313.5,529.7M283.6,519.7L279.4,526.8M591.2,545.3L599.5,546.0M598.8,532.5L607.1,533.2M606.4,519.8L614.6,520.5M614.0,507.0L622.2,507.7M621.6,494.2L629.8,494.9M629.1,481.5L637.4,482.2M636.7,468.7L645.0,469.4M644.3,455.9L652.6,456.6M651.9,443.2L660.2,443.9M659.5,430.4L667.8,431.1M283.6,506.2L275.3,505.5M283.6,479.1L275.3,478.4M283.6,452.0L275.3,451.3M283.6,424.9L275.3,424.2M283.6,397.8L275.3,397.1M283.6,370.7L275.3,370.1" stroke="#262626" stroke-width="1" fill="none"/><polygon points="378.5,353.0 344.3,359.1 351.9,344.4 386.1,337.8" fill="url(#g0)" stroke="#000" stroke-width="1" stroke-linejoin="round"/><polygon points="412.7,346.9 378.5,353.0 386.1,337.8 420.3,332.5" fill="url(#g1)" stroke="#000" stroke-width="1" stroke-linejoin="round"/><polygon points="446.8,343.8 412.7,346.9 420.3,332.5 454.4,327.2" fill="url(#g2)" stroke="#000" stroke-width="1" stroke-linejoin="round"/><polygon points="481.0,336.9 446.8,343.8 454.4,327.2 488.6,318.1" fill="url(#g3)" stroke="#000" stroke-width="1" stroke-linejoin="round"/><polygon points="515.2,325.1 481.0,336.9 488.6,318.1 522.8,303.6" fill="url(#g4)" stroke="#000" stroke-width="1" stroke-linejoin="round"/><polygon points="370.9,369.0 336.7,375.4 344.3,359.1 378.5,353.0" fill="url(#g5)" stroke="#000" stroke-width="1" stroke-linejoin="round"/><polygon points="549.4,303.4 515.2,325.1 522.8,303.6 557.0,280.9" fill="url(#g6)" stroke="#000" stroke-width="1" stroke-linejoin="round"/><polygon points="405.1,364.3 370.9,369.0 378.5,353.0 412.7,346.9" fill="url(#g7)" stroke="#000" stroke-width="1" stroke-linejoin="round"/><polygon points="583.6,288.5 549.4,303.4 557.0,280.9 591.1,275.8" fill="url(#g8)" stroke="#000" stroke-width="1" stroke-linejoin="round"/><polygon points="439.3,361.9 405.1,364.3 412.7,346.9 446.8,343.8" fill="url(#g9)" stroke="#000" stroke-width="1" stroke-linejoin="round"/><polygon points="617.7,291.4 583.6,288.5 591.1,275.8 625.3,278.6" fill="#f9fb15" stroke="#000" stroke-width="1" stroke-linejoin="round"/><polygon points="473.4,356.4 439.3,361.9 446.8,343.8 481.0,336.9" fill="url(#g10)" stroke="#000" stroke-width="1" stroke-linejoin="round"/><polygon points="651.9,294.2 617.7,291.4 625.3,278.6 659.5,281.4" fill="#f9fb15" stroke="#000" stroke-width="1" stroke-linejoin="round"/><polygon points="507.6,347.1 473.4,356.4 481.0,336.9 515.2,325.1" fill="url(#g11)" stroke="#000" stroke-width="1" stroke-linejoin="round"/><polygon points="363.3,386.6 329.1,393.3 336.7,375.4 370.9,369.0" fill="url(#g12)" stroke="#000" stroke-width="1" stroke-linejoin="round"/><polygon points="541.8,328.0 507.6,347.1 515.2,325.1 549.4,303.4" fill="url(#g13)" stroke="#000" stroke-width="1" stroke-linejoin="round"/><polygon points="397.5,382.7 363.3,386.6 370.9,369.0 405.1,364.3" fill="url(#g14)" stroke="#000" stroke-width="1" stroke-linejoin="round"/><polygon points="576.0,301.3 541.8,328.0 549.4,303.4 583.6,288.5" fill="url(#g15)" stroke="#000" stroke-width="1" stroke-linejoin="round"/><polygon points="431.7,382.0 397.5,382.7 405.1,364.3 439.3,361.9" fill="url(#g16)" stroke="#000" stroke-width="1" stroke-linejoin="round"/><polygon points="610.1,304.1 576.0,301.3 583.6,288.5 617.7,291.4" fill="#f9fb15" stroke="#000" stroke-width="1" stroke-linejoin="round"/><polygon points="465.8,378.1 431.7,382.0 439.3,361.9 473.4,356.4" fill="url(#g17)" stroke="#000" stroke-width="1" stroke-linejoin="round"/><polygon points="644.3,307.0 610.1,304.1 617.7,291.4 651.9,294.2" fill="#f9fb15" stroke="#000" stroke-width="1" stroke-linejoin="round"/><polygon points="500.0,370.7 465.8,378.1 473.4,356.4 507.6,347.1" fill="url(#g18)" stroke="#000" stroke-width="1" stroke-linejoin="round"/><polygon points="355.7,405.1 321.5,413.1 329.1,393.3 363.3,386.6" fill="url(#g19)" stroke="#000" stroke-width="1" stroke-linejoin="round"/><polygon points="534.2,351.6 500.0,370.7 507.6,347.1 541.8,328.0" fill="url(#g20)" stroke="#000" stroke-width="1" stroke-linejoin="round"/><polygon points="389.9,401.1 355.7,405.1 363.3,386.6 397.5,382.7" fill="url(#g21)" stroke="#000" stroke-width="1" stroke-linejoin="round"/><polygon points="568.4,317.8 534.2,351.6 541.8,328.0 576.0,301.3" fill="url(#g22)" stroke="#000" stroke-width="1" stroke-linejoin="round"/><polygon points="424.1,401.5 389.9,401.1 397.5,382.7 431.7,382.0" fill="url(#g23)" stroke="#000" stroke-width="1" stroke-linejoin="round"/><polygon points="602.6,316.9 568.4,317.8 576.0,301.3 610.1,304.1" fill="url(#g24)" stroke="#000" stroke-width="1" stroke-linejoin="round"/><polygon points="458.3,399.0 424.1,401.5 431.7,382.0 465.8,378.1" fill="url(#g25)" stroke="#000" stroke-width="1" stroke-linejoin="round"/><polygon points="636.7,319.7 602.6,316.9 610.1,304.1 644.3,307.0" fill="#f9fb15" stroke="#000" stroke-width="1" stroke-linejoin="round"/><polygon points="492.4,391.7 458.3,399.0 465.8,378.1 500.0,370.7" fill="url(#g26)" stroke="#000" stroke-width="1" stroke-linejoin="round"/><polygon points="348.1,427.3 314.0,434.5 321.5,413.1 355.7,405.1" fill="url(#g27)" stroke="#000" stroke-width="1" stroke-linejoin="round"/><polygon points="526.6,372.2 492.4,391.7 500.0,370.7 534.2,351.6" fill="url(#g28)" stroke="#000" stroke-width="1" stroke-linejoin="round"/><polygon points="382.3,422.0 348.1,427.3 355.7,405.1 389.9,401.1" fill="url(#g29)" stroke="#000" stroke-width="1" stroke-linejoin="round"/><polygon points="560.8,336.8 526.6,372.2 534.2,351.6 568.4,317.8" fill="url(#g30)" stroke="#000" stroke-width="1" stroke-linejoin="round"/><polygon points="416.5,419.4 382.3,422.0 389.9,401.1 424.1,401.5" fill="url(#g31)" stroke="#000" stroke-width="1" stroke-linejoin="round"/><polygon points="595.0,329.7 560.8,336.8 568.4,317.8 602.6,316.9" fill="url(#g32)" stroke="#000" stroke-width="1" stroke-linejoin="round"/><polygon points="450.7,416.8 416.5,419.4 424.1,401.5 458.3,399.0" fill="url(#g33)" stroke="#000" stroke-width="1" stroke-linejoin="round"/><polygon points="629.1,332.5 595.0,329.7 602.6,316.9 636.7,319.7" fill="#f9fb15" stroke="#000" stroke-width="1" stroke-linejoin="round"/><polygon points="484.8,410.4 450.7,416.8 458.3,399.0 492.4,391.7" fill="url(#g34)" stroke="#000" stroke-width="1" stroke-linejoin="round"/><polygon points="340.5,450.7 306.4,457.6 314.0,434.5 348.1,427.3" fill="url(#g35)" stroke="#000" stroke-width="1" stroke-linejoin="round"/><polygon points="519.0,390.6 484.8,410.4 492.4,391.7 526.6,372.2" fill="url(#g36)" stroke="#000" stroke-width="1" stroke-linejoin="round"/><polygon points="374.7,444.4 340.5,450.7 348.1,427.3 382.3,422.0" fill="url(#g37)" stroke="#000" stroke-width="1" stroke-linejoin="round"/><polygon points="553.2,353.8 519.0,390.6 526.6,372.2 560.8,336.8" fill="url(#g38)" stroke="#000" stroke-width="1" stroke-linejoin="round"/><polygon points="408.9,439.9 374.7,444.4 382.3,422.0 416.5,419.4" fill="url(#g39)" stroke="#000" stroke-width="1" stroke-linejoin="round"/><polygon points="587.4,342.4 553.2,353.8 560.8,336.8 595.0,329.7" fill="url(#g40)" stroke="#000" stroke-width="1" stroke-linejoin="round"/><polygon points="443.1,435.1 408.9,439.9 416.5,419.4 450.7,416.8" fill="url(#g41)" stroke="#000" stroke-width="1" stroke-linejoin="round"/><polygon points="621.6,345.3 587.4,342.4 595.0,329.7 629.1,332.5" fill="#f9fb15" stroke="#000" stroke-width="1" stroke-linejoin="round"/><polygon points="477.3,427.9 443.1,435.1 450.7,416.8 484.8,410.4" fill="url(#g42)" stroke="#000" stroke-width="1" stroke-linejoin="round"/><polygon points="333.0,474.3 298.8,480.6 306.4,457.6 340.5,450.7" fill="url(#g43)" stroke="#000" stroke-width="1" stroke-linejoin="round"/><polygon points="511.4,407.2 477.3,427.9 484.8,410.4 519.0,390.6" fill="url(#g44)" stroke="#000" stroke-width="1" stroke-linejoin="round"/><polygon points="367.1,467.3 333.0,474.3 340.5,450.7 374.7,444.4" fill="url(#g45)" stroke="#000" stroke-width="1" stroke-linejoin="round"/><polygon points="545.6,370.4 511.4,407.2 519.0,390.6 553.2,353.8" fill="url(#g46)" stroke="#000" stroke-width="1" stroke-linejoin="round"/><polygon points="401.3,461.9 367.1,467.3 374.7,444.4 408.9,439.9" fill="url(#g47)" stroke="#000" stroke-width="1" stroke-linejoin="round"/><polygon points="579.8,355.2 545.6,370.4 553.2,353.8 587.4,342.4" fill="url(#g48)" stroke="#000" stroke-width="1" stroke-linejoin="round"/><polygon points="435.5,456.2 401.3,461.9 408.9,439.9 443.1,435.1" fill="url(#g49)" stroke="#000" stroke-width="1" stroke-linejoin="round"/><polygon points="614.0,358.0 579.8,355.2 587.4,342.4 621.6,345.3" fill="#f9fb15" stroke="#000" stroke-width="1" stroke-linejoin="round"/><polygon points="469.7,447.0 435.5,456.2 443.1,435.1 477.3,427.9" fill="url(#g50)" stroke="#000" stroke-width="1" stroke-linejoin="round"/><polygon points="325.4,496.2 291.2,493.4 298.8,480.6 333.0,474.3" fill="url(#g51)" stroke="#000" stroke-width="1" stroke-linejoin="round"/><polygon points="503.8,424.3 469.7,447.0 477.3,427.9 511.4,407.2" fill="url(#g52)" stroke="#000" stroke-width="1" stroke-linejoin="round"/><polygon points="359.5,489.6 325.4,496.2 333.0,474.3 367.1,467.3" fill="url(#g53)" stroke="#000" stroke-width="1" stroke-linejoin="round"/><polygon points="538.0,387.2 503.8,424.3 511.4,407.2 545.6,370.4" fill="url(#g54)" stroke="#000" stroke-width="1" stroke-linejoin="round"/><polygon points="393.7,483.1 359.5,489.6 367.1,467.3 401.3,461.9" fill="url(#g55)" stroke="#000" stroke-width="1" stroke-linejoin="round"/><polygon points="572.2,368.0 538.0,387.2 545.6,370.4 579.8,355.2" fill="url(#g56)" stroke="#000" stroke-width="1" stroke-linejoin="round"/><polygon points="427.9,475.6 393.7,483.1 401.3,461.9 435.5,456.2" fill="url(#g57)" stroke="#000" stroke-width="1" stroke-linejoin="round"/><polygon points="606.4,370.8 572.2,368.0 579.8,355.2 614.0,358.0" fill="#f9fb15" stroke="#000" stroke-width="1" stroke-linejoin="round"/><polygon points="462.1,463.6 427.9,475.6 435.5,456.2 469.7,447.0" fill="url(#g58)" stroke="#000" stroke-width="1" stroke-linejoin="round"/><polygon points="317.8,509.0 283.6,506.2 291.2,493.4 325.4,496.2" fill="#3e26a8" stroke="#000" stroke-width="1" stroke-linejoin="round"/><polygon points="496.3,441.9 462.1,463.6 469.7,447.0 503.8,424.3" fill="url(#g59)" stroke="#000" stroke-width="1" stroke-linejoin="round"/><polygon points="352.0,510.5 317.8,509.0 325.4,496.2 359.5,489.6" fill="url(#g60)" stroke="#000" stroke-width="1" stroke-linejoin="round"/><polygon points="530.4,411.4 496.3,441.9 503.8,424.3 538.0,387.2" fill="url(#g61)" stroke="#000" stroke-width="1" stroke-linejoin="round"/><polygon points="386.1,502.5 352.0,510.5 359.5,489.6 393.7,483.1" fill="url(#g62)" stroke="#000" stroke-width="1" stroke-linejoin="round"/><polygon points="564.6,387.9 530.4,411.4 538.0,387.2 572.2,368.0" fill="url(#g63)" stroke="#000" stroke-width="1" stroke-linejoin="round"/><polygon points="420.3,492.8 386.1,502.5 393.7,483.1 427.9,475.6" fill="url(#g64)" stroke="#000" stroke-width="1" stroke-linejoin="round"/><polygon points="598.8,383.6 564.6,387.9 572.2,368.0 606.4,370.8" fill="url(#g65)" stroke="#000" stroke-width="1" stroke-linejoin="round"/><polygon points="454.5,478.9 420.3,492.8 427.9,475.6 462.1,463.6" fill="url(#g66)" stroke="#000" stroke-width="1" stroke-linejoin="round"/><polygon points="488.7,458.7 454.5,478.9 462.1,463.6 496.3,441.9" fill="url(#g67)" stroke="#000" stroke-width="1" stroke-linejoin="round"/><polygon points="522.8,433.8 488.7,458.7 496.3,441.9 530.4,411.4" fill="url(#g68)" stroke="#000" stroke-width="1" stroke-linejoin="round"/><polygon points="557.0,410.7 522.8,433.8 530.4,411.4 564.6,387.9" fill="url(#g69)" stroke="#000" stroke-width="1" stroke-linejoin="round"/><polygon points="591.2,396.3 557.0,410.7 564.6,387.9 598.8,383.6" fill="url(#g70)" stroke="#000" stroke-width="1" stroke-linejoin="round"/><circle cx="488.5" cy="459.3" r="3.9" fill="#f00"/><circle cx="496.1" cy="442.5" r="3.9" fill="#f00"/><circle cx="503.6" cy="424.9" r="3.9" fill="#f00"/><circle cx="511.2" cy="407.8" r="3.9" fill="#f00"/><circle cx="518.8" cy="391.2" r="3.9" fill="#f00"/><circle cx="526.4" cy="372.8" r="3.9" fill="#f00"/><circle cx="534.0" cy="352.2" r="3.9" fill="#f00"/><circle cx="541.6" cy="328.6" r="3.9" fill="#f00"/><circle cx="549.2" cy="304.0" r="3.9" fill="#f00"/><circle cx="556.8" cy="281.5" r="3.9" fill="#f00"/><path d="M488.7,458.7L496.3,441.9M496.3,441.9L503.8,424.3M503.8,424.3L511.4,407.2M511.4,407.2L519.0,390.6M519.0,390.6L526.6,372.2M526.6,372.2L534.2,351.6M534.2,351.6L541.8,328.0M541.8,328.0L549.4,303.4M549.4,303.4L557.0,280.9M488.7,458.7L522.8,433.8M488.7,458.7L454.5,478.9M496.3,441.9L530.4,411.4M496.3,441.9L462.1,463.6M503.8,424.3L538.0,387.2M503.8,424.3L469.7,447.0M511.4,407.2L545.6,370.4M511.4,407.2L477.3,427.9M519.0,390.6L553.2,353.8M519.0,390.6L484.8,410.4M526.6,372.2L560.8,336.8M526.6,372.2L492.4,391.7M534.2,351.6L568.4,317.8M534.2,351.6L500.0,370.7M541.8,328.0L576.0,301.3M541.8,328.0L507.6,347.1M549.4,303.4L583.6,288.5M549.4,303.4L515.2,325.1M557.0,280.9L591.1,275.8M557.0,280.9L522.8,303.6" stroke="#000" stroke-width="1" fill="none" opacity="0.85"/><text x="584.5" y="567.3" text-anchor="end" class="tl">0.1</text><text x="550.3" y="564.5" text-anchor="end" class="tl">0.2</text><text x="516.1" y="561.6" text-anchor="end" class="tl">0.3</text><text x="481.9" y="558.8" text-anchor="end" class="tl">0.4</text><text x="447.7" y="556.0" text-anchor="end" class="tl">0.5</text><text x="413.6" y="553.1" text-anchor="end" class="tl">0.6</text><text x="379.4" y="550.3" text-anchor="end" class="tl">0.7</text><text x="345.2" y="547.4" text-anchor="end" class="tl">0.8</text><text x="311.0" y="544.6" text-anchor="end" class="tl">0.9</text><text x="276.9" y="541.7" text-anchor="end" class="tl">1</text><text x="604.0" y="557.3" text-anchor="start" class="tl">500</text><text x="611.6" y="544.5" text-anchor="start" class="tl">1000</text><text x="619.1" y="531.8" text-anchor="start" class="tl">1500</text><text x="626.7" y="519.0" text-anchor="start" class="tl">2000</text><text x="634.3" y="506.2" text-anchor="start" class="tl">2500</text><text x="641.9" y="493.5" text-anchor="start" class="tl">3000</text><text x="649.5" y="480.7" text-anchor="start" class="tl">3500</text><text x="657.1" y="467.9" text-anchor="start" class="tl">4000</text><text x="664.7" y="455.2" text-anchor="start" class="tl">4500</text><text x="672.3" y="442.4" text-anchor="start" class="tl">5000</text><text x="271.3" y="509.8" text-anchor="end" class="tl">0</text><text x="271.3" y="482.7" text-anchor="end" class="tl">10</text><text x="271.3" y="455.6" text-anchor="end" class="tl">20</text><text x="271.3" y="428.5" text-anchor="end" class="tl">30</text><text x="271.3" y="401.4" text-anchor="end" class="tl">40</text><text x="271.3" y="374.4" text-anchor="end" class="tl">50</text><text x="476.8" y="572" text-anchor="middle" class="tl">L</text><text x="656.7" y="550" text-anchor="middle" class="tl">N</text></svg><div class="a" style="left:709px;top:56px;width:3px;height:538px;background:#f0f0f0;"></div><svg class="a" style="left:707px;top:300px" width="6" height="70" viewBox="0 0 6 70"><path d="M1 19L5 24L1 29Z M1 57L5 62L1 67Z" fill="#303030"/><path d="M3.5 30V56" stroke="#909090" stroke-dasharray="1 1"/></svg><div class="a" style="left:712px;top:56px;width:223px;height:538px;background:#f0f0f0;"></div><div class="a" style="left:712px;top:56px;width:223px;height:1px;background:#a0a0a0;"></div><div class="a" style="left:712px;top:56px;width:1px;height:538px;background:#a0a0a0;"></div><div class="a" style="left:713px;top:56px;width:1px;height:538px;background:#c8c8c8;"></div><div class="a" style="left:714px;top:57px;width:1px;height:18px;background:#fff;"></div><div class="a" style="left:713px;top:57px;width:222px;height:18px;background:#f0f0f0;box-shadow:inset 0 -1px #a0a0a0, inset 1px 1px #fff;"></div><div class="a t" style="top:60.11px;font-size:10.5px;line-height:14.5px;color:#000;font-weight:normal;left:716px;">Table Details</div><div class="a" style="left:713px;top:75px;width:222px;height:103px;background:#fff;"></div><div class="a" style="left:713px;top:92px;width:222px;height:1px;background:#a0a0a0;"></div><div class="a t" style="top:77.69px;font-size:11px;line-height:15px;color:#000;font-weight:normal;left:714px;">Lookup Table</div><div class="a t" style="top:77.69px;font-size:11px;line-height:15px;color:#000;font-weight:normal;left:806px;">MBT_Start</div><div class="a" style="left:713px;top:109px;width:222px;height:1px;background:#a0a0a0;"></div><div class="a t" style="top:94.69px;font-size:11px;line-height:15px;color:#000;font-weight:normal;left:714px;">Size</div><div class="a t" style="top:94.69px;font-size:11px;line-height:15px;color:#000;font-weight:normal;left:806px;">10 x 10</div><div class="a" style="left:713px;top:126px;width:222px;height:1px;background:#a0a0a0;"></div><div class="a t" style="top:111.69px;font-size:11px;line-height:15px;color:#000;font-weight:normal;left:714px;">Bounds</div><div class="a t" style="top:111.69px;font-size:11px;line-height:15px;color:#000;font-weight:normal;left:806px;">[0,50]</div><div class="a" style="left:713px;top:143px;width:222px;height:1px;background:#a0a0a0;"></div><div class="a t" style="top:128.69px;font-size:11px;line-height:15px;color:#000;font-weight:normal;left:714px;">Y Normalizer (R...</div><div class="a t" style="top:128.69px;font-size:11px;line-height:15px;color:#000;font-weight:normal;left:806px;">LNormalizer(L)</div><div class="a" style="left:713px;top:160px;width:222px;height:1px;background:#a0a0a0;"></div><div class="a t" style="top:145.69px;font-size:11px;line-height:15px;color:#000;font-weight:normal;left:714px;">X Normalizer (C...</div><div class="a t" style="top:145.69px;font-size:11px;line-height:15px;color:#000;font-weight:normal;left:806px;">NNormalizer(N)</div><div class="a" style="left:713px;top:177px;width:222px;height:1px;background:#a0a0a0;"></div><div class="a t" style="top:162.69px;font-size:11px;line-height:15px;color:#000;font-weight:normal;left:714px;">Last Modified</div><div class="a t" style="top:162.69px;font-size:11px;line-height:15px;color:#000;font-weight:normal;left:806px;">22-May-2007 11:05:57</div><div class="a" style="left:804px;top:75px;width:1px;height:103px;background:#a0a0a0;"></div><div class="a" style="left:713px;top:178px;width:222px;height:8px;background:#fff;"></div><div class="a t" style="top:195.69px;font-size:11px;line-height:15px;color:#000;font-weight:normal;left:714px;">Last</div><div class="a t" style="top:209.69px;font-size:11px;line-height:15px;color:#000;font-weight:normal;left:714px;">Change:</div><div class="a t" style="top:195.69px;font-size:11px;line-height:15px;color:#000;font-weight:normal;left:784px;">Extrapolated</div><div class="a" style="left:843px;top:257px;width:95px;height:23px;background:#e1e1e1;border:1px solid #adadad;box-sizing:border-box;"></div><div class="a t" style="top:261.69px;font-size:11px;line-height:15px;color:#000;font-weight:normal;left:856px;">View History...</div><div class="a" style="left:714px;top:291px;width:221px;height:1px;background:#a0a0a0;"></div><div class="a" style="left:714px;top:292px;width:221px;height:1px;background:#fff;"></div><div class="a" style="left:714px;top:292px;width:1px;height:18px;background:#fff;"></div><div class="a t" style="top:294.69px;font-size:11px;line-height:15px;color:#000;font-weight:normal;left:718px;">Used in</div><div class="a" style="left:714px;top:311px;width:221px;height:1px;background:#a0a0a0;"></div><div class="a" style="left:714px;top:312px;width:2px;height:148px;background:#808080;"></div><div class="a" style="left:715px;top:312px;width:220px;height:148px;background:#fff;"></div><div class="a" style="left:715px;top:312px;width:220px;height:16px;background:#f0f0f0;box-shadow:inset 0 -1px #a0a0a0;"></div><div class="a" style="left:871px;top:312px;width:1px;height:16px;background:#c8c8c8;"></div><div class="a t" style="top:312.69px;font-size:11px;line-height:15px;color:#000;font-weight:normal;left:718px;">Item</div><div class="a t" style="top:313.69px;font-size:11px;line-height:15px;color:#000;font-weight:normal;left:875px;">Type</div><div class="a" style="left:715px;top:328px;width:220px;height:17px;background:#ababab;"></div><div class="a" style="left:871px;top:328px;width:1px;height:17px;background:#bdbdbd;"></div><svg class="a" style="left:716px;top:329px" width="17" height="17" viewBox="716 329 17 17"><defs><linearGradient id="ig" x1="0" y1="0" x2="0" y2="1"><stop offset="0" stop-color="#f0f0f0"/><stop offset="1" stop-color="#c4c4c4"/></linearGradient></defs><rect x="717.5" y="330.5" width="13.5" height="13.5" fill="url(#ig)" stroke="#a8a8a8"/><path d="M721 334.5H727.5V339" stroke="#404040" fill="none"/><path d="M720 331.5L725 334.5L720 337.5Z" fill="#e03838"/><rect x="724.5" y="338.5" width="5" height="5" fill="#7070d8" stroke="#505090" stroke-width="0.8"/></svg><div class="a t" style="top:330.69px;font-size:11px;line-height:15px;color:#000;font-weight:normal;left:735px;">MBT_Start_Feature</div><div class="a t" style="top:330.69px;font-size:11px;line-height:15px;color:#000;font-weight:normal;left:876px;">Feature</div><div class="a" style="left:713px;top:460px;width:222px;height:30px;background:#f0f0f0;"></div><div class="a" style="left:862px;top:466px;width:75px;height:23px;background:#e1e1e1;border:1px solid #adadad;box-sizing:border-box;"></div><div class="a t" style="top:470.69px;font-size:11px;line-height:15px;color:#000;font-weight:normal;left:887px;">Open</div><div class="a" style="left:713px;top:490px;width:222px;height:1px;background:#fff;"></div></body></html>
